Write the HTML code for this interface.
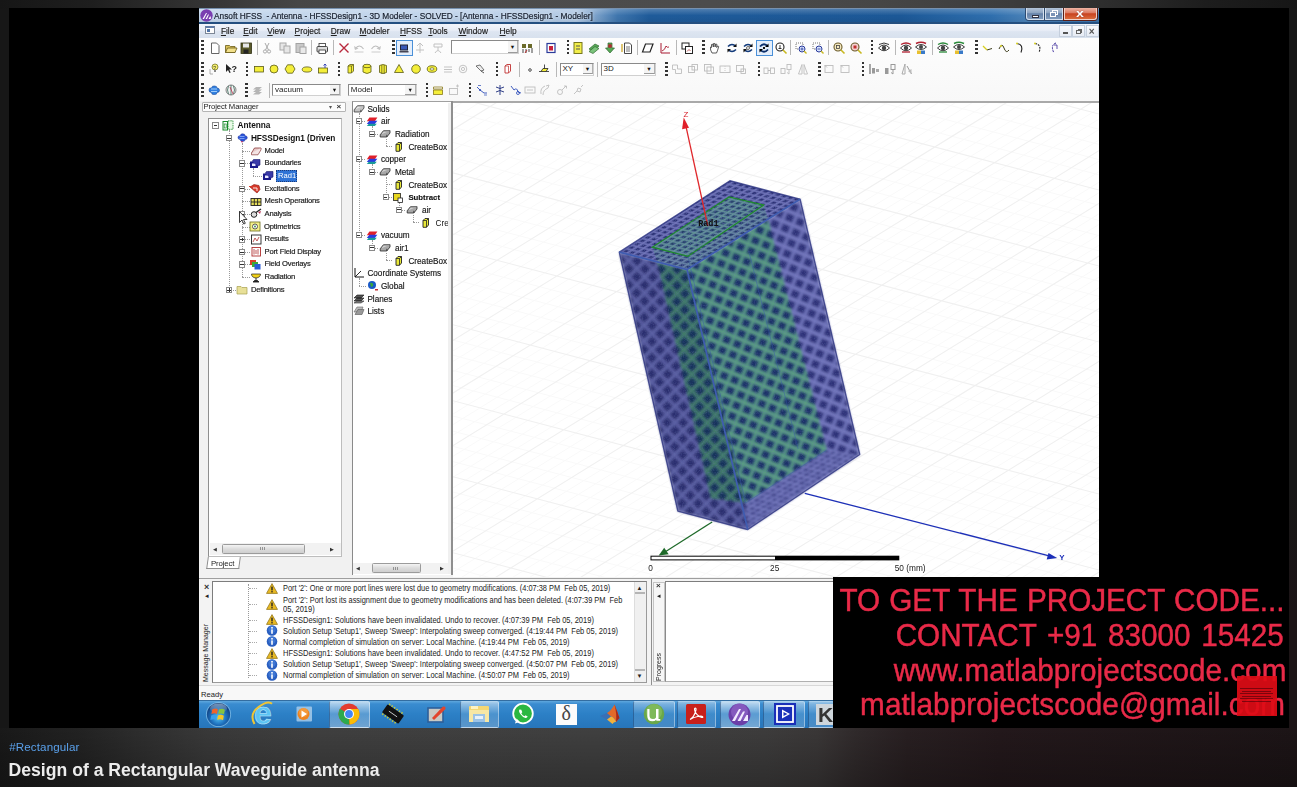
<!DOCTYPE html>
<html><head><meta charset="utf-8"><title>Design of a Rectangular Waveguide antenna</title>
<style>
html,body{margin:0;padding:0}
body{width:1297px;height:787px;overflow:hidden;position:relative;background:#1b1b1b;font-family:"Liberation Sans",sans-serif;}
div,svg{position:absolute;box-sizing:border-box}
.t{white-space:nowrap;line-height:12px;height:12px;margin-top:-6px;font-size:8px;color:#1a1a1a;}
.b{font-weight:bold}
.m{font-size:8.7px;color:#1c1c1c;transform:scaleX(.853);transform-origin:0 50%}
.ov{white-space:nowrap;font-size:29.7px;line-height:34px;height:34px;color:#e92a48;left:832.2px;width:450px;text-align:right;transform:scaleY(1.07);transform-origin:100% 26.8px;-webkit-text-stroke:.45px #e92a48}
.sep{width:1px;height:15px;background:#b8b8b8}
.grip{width:3px;height:17px;background:repeating-linear-gradient(to bottom,#333 0,#333 2px,transparent 2px,transparent 4px)}
</style></head><body>
<div style="left:0px;top:0px;width:1297px;height:787px;background:#171717"></div>
<div style="left:1280px;top:0px;width:17px;height:787px;background:linear-gradient(to bottom,#171717 0,#171717 62%,#1c1416 78%)"></div>
<div style="left:0px;top:728px;width:1297px;height:59px;background:linear-gradient(to right,#191919 0,#222222 6%,#2e2e2e 11%,#393939 16%,#3f3f3f 24%,#404040 46%,#3d3c3c 59%,#3a3737 63%,#302a2b 66%,#281f21 70%,#23181b 77%,#1c1416 100%)"></div>
<div style="left:0px;top:728px;width:1297px;height:59px;background:linear-gradient(to bottom,rgba(0,0,0,0) 0,rgba(0,0,0,.25) 100%)"></div>
<div style="left:0px;top:0px;width:1297px;height:9px;background:linear-gradient(to right,#161616 0,#1e1e1e 7%,#323232 15%,#464646 23%,#4b4b4b 32%,#4c4c4c 55%,#464646 68%,#3c3c3c 78%,#2c2c2c 86%,#1d1d1d 93%,#161616 100%)"></div>
<div style="left:0;top:0;width:1297px;height:787px;filter:blur(.45px);clip-path:inset(8px 8px 59px 9px)">
<div style="left:9px;top:8px;width:1280px;height:720px;background:#000"></div>
<div style="left:199px;top:8px;width:900px;height:720px;background:#f4f4f4"></div>
<div style="left:199px;top:8px;width:900px;height:15px;background:linear-gradient(to right,#c3d6ec 0,#bdd2ea 30%,#aec6e2 42%,#3f76ae 46.5%,#1f5b9a 50%,#1c5897 78%,#2f6fae 88%,#4a82b8 92%,#3a74ae 100%)"></div>
<div style="left:199px;top:8px;width:900px;height:1px;background:#4d6f96"></div>
<div style="left:199px;top:8px;width:900px;height:15px;background:linear-gradient(to bottom,rgba(255,255,255,.25),rgba(255,255,255,0) 50%,rgba(0,0,0,.06))"></div>
<div style="left:199px;top:22px;width:900px;height:1.5px;background:#244f80"></div>
<svg style="left:200px;top:9px" width="13" height="13" viewBox="0 0 13 13"><circle cx="6.500" cy="6.500" r="6.200" fill="#7a3fb0"/><path d="M2.500 10 L6 4 l1 0 L4 10z M5.500 10 L8 5.500 l1 0 L7 10z M8.500 10 l1.500-2.500 .8 0 0 2.500z" fill="#fff"/></svg>
<div class="t" style="left:214px;top:15.5px;font-size:8.3px;color:#141c2a;-webkit-text-stroke:.2px #1a2436;text-shadow:0 0 3px rgba(255,255,255,.9)">Ansoft HFSS&nbsp; - Antenna - HFSSDesign1 - 3D Modeler - SOLVED - [Antenna - HFSSDesign1 - Modeler]</div>
<div style="left:1026px;top:8px;width:18px;height:12px;background:linear-gradient(to bottom,#b4c4d8,#8ba2c0 45%,#6481a8 52%,#7f9abc);border:1px solid #d5e0ee;border-top:0;box-shadow:0 0 0 1px #2c4a70;border-radius:0 0 0 3px"></div>
<div style="left:1031.5px;top:14.5px;width:7.5px;height:3px;background:#fff;border:.5px solid #334"></div>
<div style="left:1045px;top:8px;width:18px;height:12px;background:linear-gradient(to bottom,#b4c4d8,#8ba2c0 45%,#6481a8 52%,#7f9abc);border:1px solid #d5e0ee;border-top:0;box-shadow:0 0 0 1px #2c4a70"></div>
<div style="left:1052px;top:10.2px;width:6px;height:5px;border:1.2px solid #fff"></div>
<div style="left:1050px;top:12.2px;width:6px;height:5px;border:1.2px solid #fff;background:#7a93b6"></div>
<div style="left:1064px;top:8px;width:33px;height:12px;background:linear-gradient(to bottom,#eeb4a4,#dc7a62 45%,#c8421f 52%,#da6a3c);border:1px solid #f0d0c8;border-top:0;box-shadow:0 0 0 1px #5a2018;border-radius:0 0 3px 0"></div>
<div class="t" style="left:1076.5px;top:13.6px;font-size:10.5px;font-weight:bold;color:#fff;line-height:10px;height:10px;margin-top:-6px;transform:scaleX(1.35);text-shadow:0 0 1px #733">x</div>
<div style="left:199px;top:23.5px;width:900px;height:14.5px;background:linear-gradient(to bottom,#f1f4fa,#e8edf6 45%,#dde5f1 55%,#d8e1ee 100%)"></div>
<div style="left:199px;top:37.5px;width:900px;height:0.8px;background:#c9d3e2"></div>
<div style="left:205px;top:25.5px;width:9.5px;height:8.5px;background:#fdfdfd;border:1px solid #7d8796;border-top:2px solid #5e7aa5"></div>
<div style="left:207px;top:29px;width:2.5px;height:3px;background:#4f74a8"></div>
<div class="t" style="left:220.9px;top:31.2px;font-size:8.3px;color:#151515;-webkit-text-stroke:.15px #222"><u>F</u>ile</div>
<div class="t" style="left:243.2px;top:31.2px;font-size:8.3px;color:#151515;-webkit-text-stroke:.15px #222"><u>E</u>dit</div>
<div class="t" style="left:267.3px;top:31.2px;font-size:8.3px;color:#151515;-webkit-text-stroke:.15px #222"><u>V</u>iew</div>
<div class="t" style="left:294.6px;top:31.2px;font-size:8.3px;color:#151515;-webkit-text-stroke:.15px #222"><u>P</u>roject</div>
<div class="t" style="left:330.8px;top:31.2px;font-size:8.3px;color:#151515;-webkit-text-stroke:.15px #222"><u>D</u>raw</div>
<div class="t" style="left:359.5px;top:31.2px;font-size:8.3px;color:#151515;-webkit-text-stroke:.15px #222"><u>M</u>odeler</div>
<div class="t" style="left:400px;top:31.2px;font-size:8.3px;color:#151515;-webkit-text-stroke:.15px #222"><u>H</u>FSS</div>
<div class="t" style="left:428.3px;top:31.2px;font-size:8.3px;color:#151515;-webkit-text-stroke:.15px #222"><u>T</u>ools</div>
<div class="t" style="left:458.4px;top:31.2px;font-size:8.3px;color:#151515;-webkit-text-stroke:.15px #222"><u>W</u>indow</div>
<div class="t" style="left:499.6px;top:31.2px;font-size:8.3px;color:#151515;-webkit-text-stroke:.15px #222"><u>H</u>elp</div>
<div style="left:1058.5px;top:24.5px;width:13px;height:12.5px;background:linear-gradient(to bottom,#fafbfd,#e6ebf4);border:1px solid #c5cfdd"></div>
<div style="left:1072px;top:24.5px;width:13px;height:12.5px;background:linear-gradient(to bottom,#fafbfd,#e6ebf4);border:1px solid #c5cfdd"></div>
<div style="left:1085.5px;top:24.5px;width:13px;height:12.5px;background:linear-gradient(to bottom,#fafbfd,#e6ebf4);border:1px solid #c5cfdd"></div>
<div style="left:1062.5px;top:32.3px;width:5px;height:1.6px;background:#555"></div>
<div style="left:1077.5px;top:28.6px;width:4.5px;height:4px;border:1px solid #666;border-top-width:1.6px"></div>
<div style="left:1076px;top:30.4px;width:4.5px;height:4px;border:1px solid #666;border-top-width:1.6px;background:#eef2f8"></div>
<div class="t" style="left:1088.8px;top:32.4px;font-size:10px;font-weight:bold;color:#555;line-height:10px;height:10px;margin-top:-5.5px">×</div>
<div style="left:199px;top:38px;width:900px;height:63px;background:linear-gradient(to bottom,#fdfdfd,#f8f8f8)"></div>
<div class="grip" style="left:201.20000000000002px;top:40.3px;width:2.6px;height:15px;"></div>
<svg style="left:207.9px;top:40.8px" width="14" height="14" viewBox="0 0 14 14"><path d="M3.500 2 h5 l2.500 2.500 v8 h-7.500z" fill="#fff" stroke="#555" stroke-width=".9"/></svg>
<svg style="left:223.5px;top:40.8px" width="14" height="14" viewBox="0 0 14 14"><path d="M1.500 4.500 h4 l1 1 h4.500 v6 h-9.500z" fill="#d9c25a" stroke="#6a5a18" stroke-width=".8"/><path d="M1.500 11.500 l2-4.500 h9.500 l-2 4.500z" fill="#f2e08a" stroke="#6a5a18" stroke-width=".8"/></svg>
<svg style="left:239.4px;top:40.8px" width="14" height="14" viewBox="0 0 14 14"><rect x="2" y="2" width="10.500" height="10.500" fill="#5a5a2a" stroke="#2f2f12" stroke-width=".8"/><rect x="4" y="2.500" width="6" height="4" fill="#e8e8e8"/><rect x="4.500" y="8.500" width="5" height="4" fill="#222"/></svg>
<div class="sep" style="left:256.9px;top:40.3px;width:1px;height:15px;"></div>
<svg style="left:260.3px;top:40.8px" width="14" height="14" viewBox="0 0 14 14"><path d="M5 2 l3.500 7 M9 2 l-3.500 7" stroke="#aaa" stroke-width="1"/><circle cx="5" cy="10.500" r="1.600" fill="none" stroke="#aaa"/><circle cx="9" cy="10.500" r="1.600" fill="none" stroke="#aaa"/></svg>
<svg style="left:277.5px;top:40.8px" width="14" height="14" viewBox="0 0 14 14"><rect x="2" y="2" width="6" height="7" fill="#e6e6e6" stroke="#a8a8a8"/><rect x="6" y="5" width="6" height="7" fill="#e6e6e6" stroke="#a8a8a8"/></svg>
<svg style="left:293.5px;top:40.8px" width="14" height="14" viewBox="0 0 14 14"><rect x="2" y="2.500" width="8" height="9" fill="#c9c9c9" stroke="#a3a3a3"/><rect x="6" y="6" width="6" height="6.500" fill="#e9e9e9" stroke="#a3a3a3"/></svg>
<div class="sep" style="left:311.0px;top:40.3px;width:1px;height:15px;"></div>
<svg style="left:315.3px;top:40.8px" width="14" height="14" viewBox="0 0 14 14"><rect x="2" y="5.500" width="10.500" height="5.500" rx="1" fill="#ddd" stroke="#333" stroke-width=".9"/><rect x="4" y="2.500" width="6.500" height="3" fill="#fff" stroke="#333" stroke-width=".8"/><rect x="4" y="9" width="6.500" height="3.500" fill="#fff" stroke="#333" stroke-width=".8"/></svg>
<div class="sep" style="left:332.8px;top:40.3px;width:1px;height:15px;"></div>
<svg style="left:336.6px;top:40.8px" width="14" height="14" viewBox="0 0 14 14"><path d="M2.500 2.500 l9 9 M11.500 2.500 l-9 9" stroke="#b8283c" stroke-width="1.400"/></svg>
<svg style="left:352.0px;top:40.8px" width="14" height="14" viewBox="0 0 14 14"><path d="M3 8 q4.500-6 8.500 0" fill="none" stroke="#bdbdbd" stroke-width="1.100"/><path d="M2 5 l1 4 3.500-1.500z" fill="#c4c4c4"/><path d="M2.500 11 h9" stroke="#ccc"/></svg>
<svg style="left:368.9px;top:40.8px" width="14" height="14" viewBox="0 0 14 14"><path d="M2.500 8 q4-6 8.500 0" fill="none" stroke="#bdbdbd" stroke-width="1.100"/><path d="M12 5 l-1 4 -3.500-1.500z" fill="#c4c4c4"/><path d="M2.500 11 h9" stroke="#ccc"/></svg>
<div class="grip" style="left:392.0px;top:40.3px;width:2.6px;height:15px;"></div>
<div style="left:396px;top:39.5px;width:17px;height:16.5px;background:#e4eefb;border:1px solid #4a90d8"></div>
<svg style="left:397.4px;top:40.8px" width="14" height="14" viewBox="0 0 14 14"><rect x="3.500" y="4" width="7" height="5" fill="#3858b8" stroke="#223"/><rect x="2.500" y="10" width="9" height="1.500" fill="#445"/></svg>
<svg style="left:412.8px;top:40.8px" width="14" height="14" viewBox="0 0 14 14"><path d="M7 2 v10 M4 5 l3-3 3 3 M3 9 h8" stroke="#c2c2c2" fill="none"/></svg>
<svg style="left:431.2px;top:40.8px" width="14" height="14" viewBox="0 0 14 14"><path d="M3 3 h8 v3 h-8z M7 6 v3 M4 12 q3-5 6 0" stroke="#c2c2c2" fill="none"/></svg>
<div style="left:450.6px;top:39.8px;width:68.5px;height:14px;background:#fff;border:1.4px solid #8a8a8a;border-bottom:1px solid #d0d0d0;border-right:1px solid #d0d0d0"></div>
<div style="left:507.5px;top:41.2px;width:10.5px;height:11.6px;background:#f4f4f4;border-bottom:1.4px solid #9a9a9a;border-right:1px solid #b0b0b0"></div>
<div class="t" style="left:509.8px;top:46.5px;font-size:5.5px;color:#111">▼</div>
<svg style="left:519.9px;top:40.8px" width="14" height="14" viewBox="0 0 14 14"><path d="M2 3 h4 v4 h-4z M8 3 h4 v4 h-4z" fill="#6a6a2a"/><path d="M3 8 v4 M6 8 v4 M9 8 v3 M12 7 v5" stroke="#444"/><path d="M5 12 l2-3" stroke="#c03030"/></svg>
<div class="sep" style="left:538.5px;top:40.3px;width:1px;height:15px;"></div>
<svg style="left:543.6px;top:40.8px" width="14" height="14" viewBox="0 0 14 14"><rect x="3" y="2.500" width="8" height="9" fill="#fff" stroke="#2a3a9a" stroke-width="1.200"/><rect x="5" y="5" width="4" height="4.500" fill="#c8203a"/></svg>
<div class="grip" style="left:566.5px;top:40.3px;width:2.6px;height:15px;"></div>
<svg style="left:571.3px;top:40.8px" width="14" height="14" viewBox="0 0 14 14"><rect x="3" y="1.500" width="8" height="11" fill="#f2ee4a" stroke="#77771c"/><path d="M5 5 h4 M5 8 h4" stroke="#555"/></svg>
<svg style="left:586.5px;top:40.8px" width="14" height="14" viewBox="0 0 14 14"><path d="M2 8 l6-5 4 2 -6 5z" fill="#58a858" stroke="#2e6a2e" stroke-width=".7"/><path d="M2 10.500 l6-5 4 2 -6 5z" fill="#7cc47c" stroke="#2e6a2e" stroke-width=".7"/></svg>
<svg style="left:603.2px;top:40.8px" width="14" height="14" viewBox="0 0 14 14"><path d="M5 2 h4 v5 h2.500 l-4.500 5 -4.500-5 h2.500z" fill="#58a858" stroke="#2e6a2e" stroke-width=".7"/><circle cx="7" cy="5" r="2" fill="#a33"/></svg>
<svg style="left:619.9px;top:40.8px" width="14" height="14" viewBox="0 0 14 14"><path d="M4.500 2 h5 l2 2 v8.500 h-7z" fill="#fff" stroke="#333" stroke-width=".9"/><path d="M6 6 h4 M6 8 h4 M6 10 h4" stroke="#555" stroke-width=".8"/><path d="M2 3 v8" stroke="#c9a11a" stroke-width="1.200"/></svg>
<div class="sep" style="left:637.0px;top:40.3px;width:1px;height:15px;"></div>
<svg style="left:641.0px;top:40.8px" width="14" height="14" viewBox="0 0 14 14"><path d="M4.500 3 h7.500 l-3 8 h-7.500z" fill="#fff" stroke="#222" stroke-width="1.200"/></svg>
<svg style="left:657.6px;top:40.8px" width="14" height="14" viewBox="0 0 14 14"><path d="M3 2 v10 h9" stroke="#a81830" fill="none"/><path d="M4 10 q3-1 4-5 q1 2 3 1" stroke="#a81830" fill="none" stroke-width=".9"/></svg>
<div class="sep" style="left:675.5px;top:40.3px;width:1px;height:15px;"></div>
<svg style="left:680.0px;top:40.8px" width="14" height="14" viewBox="0 0 14 14"><rect x="2" y="2" width="7" height="6" fill="#fff" stroke="#222"/><rect x="5.500" y="5.500" width="7" height="7" fill="#fff" stroke="#222"/><path d="M7 10.500 l2-2 1.500 1.500" stroke="#a33" fill="none" stroke-width=".8"/></svg>
<div class="grip" style="left:702.1999999999999px;top:40.3px;width:2.6px;height:15px;"></div>
<svg style="left:708.0px;top:40.8px" width="14" height="14" viewBox="0 0 14 14"><path d="M4 12 q-2-3-1.500-6 l1 .5 v-3 l1.300-.3 .5 2.800 .2-3.500 1.300 0 .3 3.500 .6-3 1.200 .3 -.2 3.200 1-1.600 1 .6 q-1 4-2.200 6.500z" fill="#fff" stroke="#333" stroke-width=".8"/></svg>
<svg style="left:725.4px;top:40.8px" width="14" height="14" viewBox="0 0 14 14"><path d="M3 5.500 q4-4 8 0 M11 8.500 q-4 4-8 0" fill="none" stroke="#123a7a" stroke-width="1.600"/><path d="M11.500 2.500 v3.500 h-3.500z M2.500 11.500 v-3.500 h3.500z" fill="#111"/></svg>
<svg style="left:741.0px;top:40.8px" width="14" height="14" viewBox="0 0 14 14"><path d="M3 5.500 q4-4 8 0 M11 8.500 q-4 4-8 0" fill="none" stroke="#123a7a" stroke-width="1.600"/><path d="M11.500 2.500 v3.500 h-3.500z M2.500 11.500 v-3.500 h3.500z" fill="#111"/><circle cx="7" cy="7" r="1.500" fill="none" stroke="#444" stroke-width=".8"/></svg>
<div style="left:755.5px;top:39.5px;width:17px;height:16.5px;background:#e4eefb;border:1px solid #4a90d8"></div>
<svg style="left:757.3px;top:40.8px" width="14" height="14" viewBox="0 0 14 14"><path d="M3 5.500 q4-4.500 8 0 M11 8.500 q-4 4.500-8 0" fill="none" stroke="#0c2f6c" stroke-width="1.800"/><path d="M11.500 2.500 v3.500 h-3.500z M2.500 11.500 v-3.500 h3.500z" fill="#000"/><rect x="6" y="6" width="2" height="2" fill="#111"/></svg>
<svg style="left:773.6px;top:40.8px" width="14" height="14" viewBox="0 0 14 14"><circle cx="6" cy="6" r="4" fill="#fff" stroke="#222" stroke-width="1.100"/><path d="M9 9 l3.500 3.500" stroke="#c8b820" stroke-width="1.600"/><path d="M6 4 v3.500 M4.500 7.500 h3" stroke="#222" stroke-width=".9"/></svg>
<div class="sep" style="left:789.5px;top:40.3px;width:1px;height:15px;"></div>
<svg style="left:793.5px;top:40.8px" width="14" height="14" viewBox="0 0 14 14"><rect x="2" y="2" width="7" height="6" fill="none" stroke="#555" stroke-dasharray="1 1" stroke-width=".8"/><circle cx="8" cy="8" r="3" fill="#d8e4ff" stroke="#2a3a9a"/><path d="M6.500 8 h3 M8 6.500 v3" stroke="#2a3a9a" stroke-width=".8"/><path d="M10 10 l2.500 2.500" stroke="#c8b820" stroke-width="1.400"/></svg>
<svg style="left:810.5px;top:40.8px" width="14" height="14" viewBox="0 0 14 14"><rect x="2" y="2" width="7" height="6" fill="none" stroke="#555" stroke-dasharray="1 1" stroke-width=".8"/><circle cx="8" cy="8" r="3" fill="#d8e4ff" stroke="#2a3a9a"/><path d="M6.500 8 h3" stroke="#2a3a9a" stroke-width=".8"/><path d="M10 10 l2.500 2.500" stroke="#c8b820" stroke-width="1.400"/></svg>
<div class="sep" style="left:827.5px;top:40.3px;width:1px;height:15px;"></div>
<svg style="left:831.5px;top:40.8px" width="14" height="14" viewBox="0 0 14 14"><circle cx="6" cy="6" r="4" fill="#f5e9c0" stroke="#6a5a2a" stroke-width="1.100"/><rect x="4.500" y="4.500" width="3" height="3" fill="none" stroke="#444" stroke-width=".8"/><path d="M9 9 l3.500 3.500" stroke="#c8b820" stroke-width="1.600"/></svg>
<svg style="left:849.3px;top:40.8px" width="14" height="14" viewBox="0 0 14 14"><circle cx="6" cy="6" r="4" fill="#f5d0d0" stroke="#6a5a2a" stroke-width="1.100"/><rect x="4.500" y="4.500" width="3" height="3" fill="#c03030"/><path d="M9 9 l3.500 3.500" stroke="#c8b820" stroke-width="1.600"/></svg>
<div class="grip" style="left:870.8px;top:40.3px;width:2.6px;height:15px;"></div>
<svg style="left:876.5px;top:40.8px" width="14" height="14" viewBox="0 0 14 14"><path d="M1.500 7 q5.500-6 11 0 q-5.500 5.500-11 0z" fill="#fff" stroke="#222" stroke-width=".9"/><circle cx="7" cy="7" r="2.200" fill="#444"/><path d="M2 3.500 q5-3 10 0" stroke="#222" fill="none" stroke-width=".9"/></svg>
<div class="sep" style="left:894.5px;top:40.3px;width:1px;height:15px;"></div>
<svg style="left:899.3px;top:40.8px" width="14" height="14" viewBox="0 0 14 14"><path d="M1.500 7 q5.500-6 11 0 q-5.500 5.500-11 0z" fill="#fff" stroke="#222" stroke-width=".9"/><circle cx="7" cy="7" r="2.200" fill="#444"/><path d="M2 3.500 q5-3 10 0" stroke="#b02030" fill="none" stroke-width="1.400"/><path d="M3 11 h8" stroke="#b02030" stroke-width="1.300"/></svg>
<svg style="left:913.8px;top:40.8px" width="14" height="14" viewBox="0 0 14 14"><path d="M1.500 6 q5.500-5 11 0 q-5.500 5-11 0z" fill="#fff" stroke="#222" stroke-width=".9"/><circle cx="7" cy="6" r="2" fill="#444"/><path d="M2 2.500 q5-2.500 10 0" stroke="#b02030" fill="none" stroke-width="1.400"/><rect x="3" y="9.500" width="4" height="3.500" fill="#e8c030"/><rect x="7" y="9.500" width="4" height="3.500" fill="#3a7ac8"/></svg>
<div class="sep" style="left:931.5px;top:40.3px;width:1px;height:15px;"></div>
<svg style="left:935.5px;top:40.8px" width="14" height="14" viewBox="0 0 14 14"><path d="M1.500 7 q5.500-6 11 0 q-5.500 5.500-11 0z" fill="#fff" stroke="#222" stroke-width=".9"/><circle cx="7" cy="7" r="2.200" fill="#444"/><path d="M2 3.500 q5-3 10 0" stroke="#2a8a3a" fill="none" stroke-width="1.400"/><path d="M3 11 h8" stroke="#2a8a3a" stroke-width="1.300"/></svg>
<svg style="left:951.8px;top:40.8px" width="14" height="14" viewBox="0 0 14 14"><path d="M1.500 6 q5.500-5 11 0 q-5.500 5-11 0z" fill="#fff" stroke="#222" stroke-width=".9"/><circle cx="7" cy="6" r="2" fill="#444"/><path d="M2 2.500 q5-2.500 10 0" stroke="#2a8a3a" fill="none" stroke-width="1.400"/><rect x="3" y="9.500" width="4" height="3.500" fill="#e8c030"/><rect x="7" y="9.500" width="4" height="3.500" fill="#3a7ac8"/></svg>
<div class="grip" style="left:975.0px;top:40.3px;width:2.6px;height:15px;"></div>
<svg style="left:980.8px;top:40.8px" width="14" height="14" viewBox="0 0 14 14"><path d="M2 5 l4 4 5-1.500" fill="none" stroke="#3a3a1a" stroke-width="1"/><path d="M2 5 l4 4" stroke="#d8d020" stroke-width="1.200"/></svg>
<svg style="left:997.0px;top:40.8px" width="14" height="14" viewBox="0 0 14 14"><path d="M2 8 q3-7 5-1 t5 2" fill="none" stroke="#3a3a1a" stroke-width="1"/><circle cx="4" cy="5" r="1" fill="#d8d020"/></svg>
<svg style="left:1013.4px;top:40.8px" width="14" height="14" viewBox="0 0 14 14"><path d="M4 2.500 q7 1 4 9" fill="none" stroke="#222" stroke-width="1.100"/><circle cx="4" cy="2.500" r="1" fill="#d8d020"/></svg>
<svg style="left:1030.8px;top:40.8px" width="14" height="14" viewBox="0 0 14 14"><path d="M4 2.500 q7 1 4 9" fill="none" stroke="#222" stroke-width="1.100" stroke-dasharray="2 1"/><circle cx="4" cy="2.500" r="1" fill="#d8d020"/></svg>
<svg style="left:1047.0px;top:40.8px" width="14" height="14" viewBox="0 0 14 14"><path d="M9 2 q-6 2-2 10" fill="none" stroke="#3a2a9a" stroke-width="1" stroke-dasharray="2 1"/><path d="M7 4 h3 v4" stroke="#3a2a9a" fill="none" stroke-width=".8"/></svg>
<div class="grip" style="left:201.20000000000002px;top:61.5px;width:2.6px;height:15px;"></div>
<svg style="left:207.0px;top:62.0px" width="14" height="14" viewBox="0 0 14 14"><circle cx="8" cy="5" r="3" fill="#f4ee6a" stroke="#7a7a2a" stroke-width=".8"/><path d="M7 8 h2 v2 h-2z" fill="#888"/><path d="M3 7 v5 h3" stroke="#999" fill="none" stroke-width=".8"/><text x="6.300" y="7.500" font-size="5" font-family="Liberation Sans,sans-serif" fill="#333">?</text></svg>
<svg style="left:223.8px;top:62.0px" width="14" height="14" viewBox="0 0 14 14"><path d="M2 2 l0 8 2-2 1.500 3 1.200-.6 -1.500-3 2.800 0z" fill="#222"/><text x="7.500" y="9.500" font-size="9" font-weight="bold" font-family="Liberation Sans,sans-serif" fill="#222">?</text></svg>
<div class="grip" style="left:245.5px;top:61.5px;width:2.6px;height:15px;"></div>
<svg style="left:252.10000000000002px;top:62.0px" width="14" height="14" viewBox="0 0 14 14"><rect x="2.500" y="4.500" width="9" height="5.500" fill="#f4ee3a" stroke="#5a5a18" stroke-width=".8"/></svg>
<svg style="left:267.4px;top:62.0px" width="14" height="14" viewBox="0 0 14 14"><circle cx="7" cy="7" r="4" fill="#f4ee3a" stroke="#5a5a18" stroke-width=".8"/></svg>
<svg style="left:283.4px;top:62.0px" width="14" height="14" viewBox="0 0 14 14"><path d="M4.500 2.800 h5 l2.500 4.200 -2.500 4.200 h-5 l-2.500-4.200z" fill="#f4ee3a" stroke="#5a5a18" stroke-width=".8"/></svg>
<svg style="left:300.0px;top:62.0px" width="14" height="14" viewBox="0 0 14 14"><ellipse cx="7" cy="7.500" rx="4.800" ry="2.600" fill="#f4ee3a" stroke="#5a5a18" stroke-width=".8"/></svg>
<svg style="left:316.0px;top:62.0px" width="14" height="14" viewBox="0 0 14 14"><rect x="2.500" y="6" width="9" height="5" fill="#f4ee3a" stroke="#5a5a18" stroke-width=".8"/><path d="M9 6 v-3.500 M7.500 3.500 l1.500-1.500 1.500 1.500" stroke="#2a3ab0" fill="none" stroke-width=".9"/></svg>
<div class="grip" style="left:337.8px;top:61.5px;width:2.6px;height:15px;"></div>
<svg style="left:344.3px;top:62.0px" width="14" height="14" viewBox="0 0 14 14"><path d="M4 4 l2-1.500 h3.500 v6.500 l-2 2 h-3.500z" fill="#f4ee3a" stroke="#5a5a18" stroke-width=".8"/><path d="M4 4 h3.500 v7 M7.500 4 l2-1.500" fill="none" stroke="#5a5a18" stroke-width=".7"/></svg>
<svg style="left:360.3px;top:62.0px" width="14" height="14" viewBox="0 0 14 14"><path d="M3 4 v6 q4 3 8 0 v-6z" fill="#f4ee3a" stroke="#5a5a18" stroke-width=".8"/><ellipse cx="7" cy="4" rx="4" ry="1.700" fill="#f4ee3a" stroke="#5a5a18" stroke-width=".8"/></svg>
<svg style="left:376.3px;top:62.0px" width="14" height="14" viewBox="0 0 14 14"><path d="M3.500 3.500 q3.500-2 7 0 v7 q-3.500 2-7 0z" fill="#f4ee3a" stroke="#5a5a18" stroke-width=".8"/><path d="M5.800 3 v9 M8.200 3 v9" stroke="#5a5a18" stroke-width=".7"/></svg>
<svg style="left:392.2px;top:62.0px" width="14" height="14" viewBox="0 0 14 14"><path d="M7 2.500 l4.500 8 h-9z" fill="#f4ee3a" stroke="#5a5a18" stroke-width=".8"/></svg>
<svg style="left:408.9px;top:62.0px" width="14" height="14" viewBox="0 0 14 14"><circle cx="7" cy="7" r="4.300" fill="#f4ee3a" stroke="#5a5a18" stroke-width=".8"/></svg>
<svg style="left:425.2px;top:62.0px" width="14" height="14" viewBox="0 0 14 14"><ellipse cx="7" cy="7" rx="4.800" ry="3.300" fill="#f4ee3a" stroke="#5a5a18" stroke-width=".8"/><ellipse cx="7" cy="7" rx="2" ry="1.200" fill="#fff" stroke="#5a5a18" stroke-width=".7"/></svg>
<svg style="left:441.2px;top:62.0px" width="14" height="14" viewBox="0 0 14 14"><path d="M3 5 h8 M3 7.500 h8 M3 10 h8" fill="none" stroke="#bdbdbd" stroke-width=".9"/></svg>
<svg style="left:456.0px;top:62.0px" width="14" height="14" viewBox="0 0 14 14"><circle cx="7" cy="7" r="3.800" fill="none" stroke="#bdbdbd" stroke-width=".9"/><circle cx="7" cy="7" r="1.600" fill="none" stroke="#bdbdbd" stroke-width=".9"/></svg>
<svg style="left:473.0px;top:62.0px" width="14" height="14" viewBox="0 0 14 14"><path d="M3 4 l4-1 4 5 -3 1z" fill="#eee" stroke="#555" stroke-width=".8"/><path d="M8 9 l3 2" stroke="#555"/></svg>
<div class="grip" style="left:495.5px;top:61.5px;width:2.6px;height:15px;"></div>
<svg style="left:501.0px;top:62.0px" width="14" height="14" viewBox="0 0 14 14"><path d="M4 4 l2-1.500 h3.500 v6.500 l-2 2 h-3.500z" fill="#fff" stroke="#c03030" stroke-width=".9"/><path d="M4 4 h3.500 v7" fill="none" stroke="#c03030" stroke-width=".7"/></svg>
<div class="sep" style="left:519.3px;top:61.5px;width:1px;height:15px;"></div>
<svg style="left:523.4px;top:62.0px" width="14" height="14" viewBox="0 0 14 14"><circle cx="7" cy="8" r="1.300" fill="#fff" stroke="#222" stroke-width=".8"/></svg>
<svg style="left:536.9px;top:62.0px" width="14" height="14" viewBox="0 0 14 14"><path d="M2 9.500 h10 M4 9.500 l2-3 h5 l-2 3" stroke="#222" fill="#f4ee3a" stroke-width=".8"/><path d="M7.500 6.500 v-4" stroke="#222" stroke-width=".8"/></svg>
<div class="sep" style="left:555.8px;top:61.5px;width:1px;height:15px;"></div>
<div style="left:559.5px;top:62.5px;width:34.5px;height:13px;background:#fff;border:1.4px solid #8a8a8a;border-bottom:1px solid #d0d0d0;border-right:1px solid #d0d0d0"></div>
<div style="left:582.5px;top:63.9px;width:10.5px;height:10.6px;background:#f4f4f4;border-bottom:1.4px solid #9a9a9a;border-right:1px solid #b0b0b0"></div>
<div class="t" style="left:584.8px;top:68.7px;font-size:5.500px;color:#111">▼</div>
<div class="t" style="left:562.5px;top:69.3px;font-size:8px;color:#222">XY</div>
<div class="sep" style="left:596.5px;top:61.5px;width:1px;height:15px;"></div>
<div style="left:600.5px;top:62.5px;width:55px;height:13px;background:#fff;border:1.4px solid #8a8a8a;border-bottom:1px solid #d0d0d0;border-right:1px solid #d0d0d0"></div>
<div style="left:644.0px;top:63.9px;width:10.5px;height:10.6px;background:#f4f4f4;border-bottom:1.4px solid #9a9a9a;border-right:1px solid #b0b0b0"></div>
<div class="t" style="left:646.3px;top:68.7px;font-size:5.500px;color:#111">▼</div>
<div class="t" style="left:603.5px;top:69.3px;font-size:8px;color:#222">3D</div>
<div class="grip" style="left:665.0999999999999px;top:61.5px;width:2.6px;height:15px;"></div>
<svg style="left:670.3px;top:62.0px" width="14" height="14" viewBox="0 0 14 14"><path d="M2.500 3 h5 v4 h4 v4.500 h-6 v-4 h-3z" fill="none" stroke="#bdbdbd" stroke-width=".9"/></svg>
<svg style="left:685.7px;top:62.0px" width="14" height="14" viewBox="0 0 14 14"><rect x="2.500" y="4.500" width="6" height="6" fill="none" stroke="#bdbdbd" stroke-width=".9"/><rect x="6" y="2.500" width="5.500" height="5.500" fill="none" stroke="#bdbdbd" stroke-width=".9"/></svg>
<svg style="left:702.0px;top:62.0px" width="14" height="14" viewBox="0 0 14 14"><rect x="2.500" y="2.500" width="6.500" height="6.500" fill="none" stroke="#bdbdbd" stroke-width=".9"/><rect x="5" y="5" width="6.500" height="6.500" fill="none" stroke="#bdbdbd" stroke-width=".9"/></svg>
<svg style="left:717.6px;top:62.0px" width="14" height="14" viewBox="0 0 14 14"><rect x="2" y="4" width="10" height="6.500" fill="none" stroke="#bdbdbd" stroke-width=".9"/><path d="M7 4 v6.500" stroke="#ccc" stroke-dasharray="1 1"/></svg>
<svg style="left:734.3px;top:62.0px" width="14" height="14" viewBox="0 0 14 14"><rect x="2.500" y="3.500" width="7" height="6" fill="none" stroke="#bdbdbd" stroke-width=".9"/><rect x="7" y="7" width="4.500" height="4.500" fill="none" stroke="#bdbdbd" stroke-width=".9"/></svg>
<div class="grip" style="left:757.8px;top:61.5px;width:2.6px;height:15px;"></div>
<svg style="left:762.4px;top:62.0px" width="14" height="14" viewBox="0 0 14 14"><rect x="2" y="6" width="4" height="5.500" fill="none" stroke="#bdbdbd" stroke-width=".9"/><rect x="8.500" y="6" width="4" height="5.500" fill="none" stroke="#bdbdbd" stroke-width=".9"/><path d="M6 8.500 h2.500" stroke="#bbb"/></svg>
<svg style="left:779.0px;top:62.0px" width="14" height="14" viewBox="0 0 14 14"><rect x="2" y="6.500" width="4" height="5" fill="none" stroke="#bdbdbd" stroke-width=".9"/><rect x="8" y="2.500" width="4" height="5" fill="none" stroke="#bdbdbd" stroke-width=".9"/><path d="M10 8 v4 l-2-1.500" fill="none" stroke="#bdbdbd" stroke-width=".9"/></svg>
<svg style="left:795.7px;top:62.0px" width="14" height="14" viewBox="0 0 14 14"><path d="M6 2.500 v9.500 l-3.500 0z M8 2.500 v9.500 l3.500 0z" fill="none" stroke="#bdbdbd" stroke-width=".9"/></svg>
<div class="grip" style="left:818.1999999999999px;top:61.5px;width:2.6px;height:15px;"></div>
<svg style="left:822.0px;top:62.0px" width="14" height="14" viewBox="0 0 14 14"><rect x="3" y="3.500" width="8" height="7" fill="none" stroke="#bdbdbd" stroke-width=".9"/><path d="M3 3.500 l2 2" stroke="#bbb"/></svg>
<svg style="left:838.4px;top:62.0px" width="14" height="14" viewBox="0 0 14 14"><rect x="3" y="3.500" width="8" height="7" fill="none" stroke="#bdbdbd" stroke-width=".9"/><path d="M3 3.500 l2 2" stroke="#bbb"/></svg>
<div class="grip" style="left:861.5999999999999px;top:61.5px;width:2.6px;height:15px;"></div>
<svg style="left:866.7px;top:62.0px" width="14" height="14" viewBox="0 0 14 14"><path d="M3 2 v10" stroke="#555"/><rect x="5" y="6" width="3" height="5.500" fill="#999"/><rect x="9" y="7" width="3" height="3" fill="#aaa"/></svg>
<svg style="left:883.0px;top:62.0px" width="14" height="14" viewBox="0 0 14 14"><rect x="2" y="6" width="3.500" height="6" fill="#999"/><rect x="8" y="2.500" width="4" height="5" fill="none" stroke="#999"/><path d="M10 8 v4 l-2-1.500" stroke="#999" fill="none"/></svg>
<svg style="left:900.0px;top:62.0px" width="14" height="14" viewBox="0 0 14 14"><path d="M5 2 v10 l-3 0z" fill="none" stroke="#aaa"/><path d="M7 4 l4.500 8" stroke="#999"/><path d="M8 9 l3.500 3 v-5" fill="#bbb"/></svg>
<div class="grip" style="left:201.20000000000002px;top:82.7px;width:2.6px;height:15px;"></div>
<svg style="left:206.6px;top:83.2px" width="14" height="14" viewBox="0 0 14 14"><path d="M2 7 q0-2.500 2.500-2 q.5-2.500 3-2 q2.500 0 2.500 2 q2.500 0 2.500 2.500 q0 2-2.500 2 q0 2.500-3 2 q-2.500 .5-2.500-2 q-2.500 0-2.500-2.500z" fill="#2f7fe0" stroke="#1a4a9a" stroke-width=".6"/><path d="M4 6 h6 M4 8.500 h6" stroke="#bfe0ff" stroke-width=".8"/></svg>
<svg style="left:223.5px;top:83.2px" width="14" height="14" viewBox="0 0 14 14"><circle cx="7" cy="7" r="5" fill="#f2f2f2" stroke="#666" stroke-width=".8"/><path d="M7 2 v10 M4.500 3 q-2 4 0 8 M9.500 3 q2 4 0 8" stroke="#3a6a5a" fill="none" stroke-width=".8"/><path d="M6 4 l3 7" stroke="#c03050" stroke-width=".8"/></svg>
<div class="grip" style="left:245.20000000000002px;top:82.7px;width:2.6px;height:15px;"></div>
<svg style="left:250.39999999999998px;top:83.2px" width="14" height="14" viewBox="0 0 14 14"><path d="M3 9 l3-2.500 h6 l-3 2.500z M3 6.500 l3-2.500 h6 l-3 2.500z M3 11.500 l3-2.500 h6 l-3 2.500z" fill="#b5b5b5"/></svg>
<div class="sep" style="left:269.0px;top:82.7px;width:1px;height:15px;"></div>
<div style="left:272px;top:83.8px;width:69px;height:12.5px;background:#fff;border:1.4px solid #8a8a8a;border-bottom:1px solid #d0d0d0;border-right:1px solid #d0d0d0"></div>
<div style="left:329.5px;top:85.2px;width:10.5px;height:10.1px;background:#f4f4f4;border-bottom:1.4px solid #9a9a9a;border-right:1px solid #b0b0b0"></div>
<div class="t" style="left:331.8px;top:89.75px;font-size:5.500px;color:#111">▼</div>
<div class="t" style="left:275px;top:90.35px;font-size:8px;color:#222">vacuum</div>
<div style="left:347.8px;top:83.8px;width:69px;height:12.5px;background:#fff;border:1.4px solid #8a8a8a;border-bottom:1px solid #d0d0d0;border-right:1px solid #d0d0d0"></div>
<div style="left:405.3px;top:85.2px;width:10.5px;height:10.1px;background:#f4f4f4;border-bottom:1.4px solid #9a9a9a;border-right:1px solid #b0b0b0"></div>
<div class="t" style="left:407.6px;top:89.75px;font-size:5.500px;color:#111">▼</div>
<div class="t" style="left:350.8px;top:90.35px;font-size:8px;color:#222">Model</div>
<div class="grip" style="left:425.7px;top:82.7px;width:2.6px;height:15px;"></div>
<svg style="left:431.2px;top:83.2px" width="14" height="14" viewBox="0 0 14 14"><path d="M2.500 4 h9 v2 h-9z" fill="#fff" stroke="#8a7a1a" stroke-width=".8"/><rect x="2.500" y="7" width="9" height="4.500" fill="#f4ee3a" stroke="#8a7a1a" stroke-width=".8"/></svg>
<svg style="left:447.2px;top:83.2px" width="14" height="14" viewBox="0 0 14 14"><rect x="2.500" y="5.500" width="8" height="6" fill="none" stroke="#bdbdbd" stroke-width=".9"/><path d="M9 3 h3 M10.500 1.500 v3" stroke="#c4c4c4"/></svg>
<div class="grip" style="left:468.90000000000003px;top:82.7px;width:2.6px;height:15px;"></div>
<svg style="left:474.5px;top:83.2px" width="14" height="14" viewBox="0 0 14 14"><path d="M2 4 l3 3 M5 7 l4 3 h3" stroke="#2a4ab8" fill="none" stroke-width=".9"/><circle cx="5" cy="7" r="1" fill="#2a4ab8"/><path d="M3 2.500 h3 M9 12 h3" stroke="#2a4ab8" stroke-width=".7"/></svg>
<svg style="left:492.6px;top:83.2px" width="14" height="14" viewBox="0 0 14 14"><path d="M7 2 v10 M3 4 q4 3 8 0 M3 9 q4-3 8 0" stroke="#1a2a7a" fill="none" stroke-width=".9"/></svg>
<svg style="left:508.5px;top:83.2px" width="14" height="14" viewBox="0 0 14 14"><path d="M2 3 l3 4 M5 7 q3-3 4 2 l3 1" stroke="#2a4ab8" fill="none" stroke-width=".9"/><circle cx="9" cy="10" r="1.500" fill="none" stroke="#2a4ab8" stroke-width=".8"/></svg>
<svg style="left:523.4px;top:83.2px" width="14" height="14" viewBox="0 0 14 14"><rect x="2" y="4" width="10" height="6" fill="none" stroke="#bdbdbd" stroke-width=".9"/><path d="M4 7 h6" stroke="#c4c4c4"/></svg>
<svg style="left:537.6px;top:83.2px" width="14" height="14" viewBox="0 0 14 14"><path d="M3 11 q-1-6 4-8 M5 12 q0-5 5-7 M8 3 l3-1 -1 3" fill="none" stroke="#bdbdbd" stroke-width=".9"/></svg>
<svg style="left:554.6px;top:83.2px" width="14" height="14" viewBox="0 0 14 14"><circle cx="5" cy="9" r="2.500" fill="none" stroke="#bdbdbd" stroke-width=".9"/><path d="M7 7 l4-4 M9 3 h2.500 v2.500" fill="none" stroke="#bdbdbd" stroke-width=".9"/></svg>
<svg style="left:571.3px;top:83.2px" width="14" height="14" viewBox="0 0 14 14"><path d="M3 11 l3-3 M6 8 l1-3 3 1 -1 3z M10 4 l2-2" fill="none" stroke="#bdbdbd" stroke-width=".9"/></svg>
<div style="left:199px;top:101px;width:154px;height:477px;background:#f1f1f1"></div>
<div style="left:202px;top:101.8px;width:144px;height:9.8px;background:#fcfcfc;border:1px solid #b4b4b4;border-radius:1px"></div>
<div class="t" style="left:203.6px;top:106.6px;font-size:7.7px;color:#1a1a1a;letter-spacing:-.1px">Project Manager</div>
<div class="t" style="left:329px;top:107px;font-size:6px;color:#555">▾</div>
<div class="t" style="left:336.5px;top:106.8px;font-size:8px;font-weight:bold;color:#333">×</div>
<div style="left:208.2px;top:117.5px;width:133.5px;height:439px;background:#fff;border:1px solid #8e8e8e;border-right-color:#bdbdbd;border-bottom-color:#bdbdbd"></div>
<div style="left:209.5px;top:543px;width:131px;height:11.5px;background:#f2f2f2"></div>
<div class="t" style="left:212.5px;top:548.6px;font-size:5px;color:#333">◀</div>
<div class="t" style="left:330px;top:548.6px;font-size:5px;color:#333">▶</div>
<div style="left:222px;top:544px;width:83px;height:9.5px;background:linear-gradient(to bottom,#f4f4f4,#dcdcdc 50%,#cfcfcf);border:1px solid #9b9b9b;border-radius:1.5px"></div>
<div class="t" style="left:259.5px;top:548.3px;font-size:6px;color:#555;letter-spacing:.3px">ııı</div>
<div style="left:206.5px;top:556.5px;width:32.5px;height:12px;background:#fff;border:1px solid #8e8e8e;border-top:0;transform:skewX(-8deg)"></div>
<div class="t" style="left:211px;top:563.6px;font-size:7.8px;color:#222;letter-spacing:-.15px">Project</div>
<div style="left:228.7px;top:130.3px;width:1px;height:159.45px;border-left:1px dotted #9a9a9a"></div>
<div style="left:242px;top:142.95px;width:1px;height:134.15000000000003px;border-left:1px dotted #9a9a9a"></div>
<div style="left:228.7px;top:289.75px;width:7.300000000000011px;height:1px;border-top:1px dotted #9a9a9a"></div>
<div style="left:253px;top:168.25px;width:1px;height:7.650000000000006px;border-left:1px dotted #9a9a9a"></div>
<div style="left:253px;top:175.9px;width:9px;height:1px;border-top:1px dotted #9a9a9a"></div>
<div style="left:212.3px;top:122.3px;width:6.4px;height:6.4px;background:#fff;border:1px solid #8a8a8a"></div>
<div style="left:213.70000000000002px;top:125.1px;width:3.6px;height:0.9px;background:#333"></div>
<svg style="left:222.0px;top:119.8px" width="12" height="11" viewBox="0 0 12 11"><rect x="1" y="1.500" width="4.500" height="8.500" fill="#fff" stroke="#1a8a2a"/><rect x="2.200" y="4" width="2" height="4" fill="none" stroke="#1a8a2a" stroke-width=".7"/><rect x="6" y=".8" width="5" height="8.500" fill="#eafbe8" stroke="#1a8a2a" stroke-width=".8" stroke-dasharray="1.500 .8"/></svg>
<div class="t" style="left:237.6px;top:125.3px;font-weight:bold;font-size:8.300px;color:#111;letter-spacing:-.05px">Antenna</div>
<div style="left:225.7px;top:134.95px;width:6.4px;height:6.4px;background:#fff;border:1px solid #8a8a8a"></div>
<div style="left:227.1px;top:137.75px;width:3.6px;height:0.9px;background:#333"></div>
<svg style="left:235.5px;top:132.45px" width="12" height="11" viewBox="0 0 12 11"><path d="M2 5.500 q0-2 2.200-1.700 q.3-2.300 2.600-2 q2.300 0 2.300 2 q2.200 0 2.200 2 q0 1.800-2.200 1.800 q0 2-2.500 1.800 q-2.200 .3-2.300-1.800 q-2.300 0-2.300-2.100z" fill="#2a55d8" stroke="#1a2a9a" stroke-width=".5"/><path d="M5 9 l1 2 1-2z" fill="#c03060"/><path d="M3.500 4.500 h5 M3.500 6.500 h5" stroke="#9cc0ff" stroke-width=".7"/></svg>
<div class="t" style="left:250.9px;top:137.95px;font-weight:bold;font-size:8.300px;color:#111;letter-spacing:-.05px">HFSSDesign1 (Driven</div>
<div style="left:242px;top:150.6px;width:8px;height:1px;border-top:1px dotted #9a9a9a"></div>
<svg style="left:249.5px;top:145.1px" width="12" height="11" viewBox="0 0 12 11"><path d="M1.500 8 l3-5 h6.500 l-3 5z" fill="#e8c8c8" stroke="#8a3a3a" stroke-width=".8"/><path d="M1.500 8 v1.800 h6.500 l3-5 v-1.800" fill="#f4e4e4" stroke="#8a3a3a" stroke-width=".7"/></svg>
<div class="t" style="left:264.6px;top:150.6px;font-size:7.600px;color:#161616;letter-spacing:-.18px;-webkit-text-stroke:.18px #222">Model</div>
<div style="left:242px;top:163.25px;width:8px;height:1px;border-top:1px dotted #9a9a9a"></div>
<div style="left:239px;top:160.25px;width:6.4px;height:6.4px;background:#fff;border:1px solid #8a8a8a"></div>
<div style="left:240.4px;top:163.05px;width:3.6px;height:0.9px;background:#333"></div>
<svg style="left:249.0px;top:157.75px" width="12" height="11" viewBox="0 0 12 11"><rect x="1" y="3.500" width="8" height="6.500" fill="#1a1a8a"/><rect x="3" y="5.500" width="3.500" height="2.500" fill="#e8e8ff"/><path d="M3 3.500 l1.500-2 h6.500 v5.500 l-2 1" fill="#3a3aa8" stroke="#1a1a6a" stroke-width=".6"/></svg>
<div class="t" style="left:264.6px;top:163.25px;font-size:7.600px;color:#161616;letter-spacing:-.18px;-webkit-text-stroke:.18px #222">Boundaries</div>
<svg style="left:262.0px;top:170.4px" width="12" height="11" viewBox="0 0 12 11"><rect x="1" y="3.500" width="8" height="6.500" fill="#1a1a8a"/><rect x="3" y="5.500" width="3.500" height="2.500" fill="#e8e8ff"/><path d="M3 3.500 l1.500-2 h6.500 v5.500 l-2 1" fill="#3a3aa8" stroke="#1a1a6a" stroke-width=".6"/></svg>
<div style="left:276.3px;top:169.9px;width:20.5px;height:12px;background:#2f74d6;border:1px dotted #1a3a7a"></div>
<div class="t" style="left:278px;top:175.9px;color:#fff;font-size:7.600px">Rad1</div>
<div style="left:242px;top:188.55px;width:8px;height:1px;border-top:1px dotted #9a9a9a"></div>
<div style="left:239px;top:185.55px;width:6.4px;height:6.4px;background:#fff;border:1px solid #8a8a8a"></div>
<div style="left:240.4px;top:188.35000000000002px;width:3.6px;height:0.9px;background:#333"></div>
<svg style="left:249.0px;top:183.05px" width="12" height="11" viewBox="0 0 12 11"><path d="M1 4 l4-2.500 5 1 1 4 -3 3.500 -3-2.500z" fill="#d83a2a" stroke="#8a1a10" stroke-width=".6"/><path d="M4 5 h4 v3" stroke="#fff" fill="none" stroke-width=".9"/><path d="M0 3.500 h3" stroke="#d83a2a"/></svg>
<div class="t" style="left:264.6px;top:188.55px;font-size:7.600px;color:#161616;letter-spacing:-.18px;-webkit-text-stroke:.18px #222">Excitations</div>
<div style="left:242px;top:201.2px;width:8px;height:1px;border-top:1px dotted #9a9a9a"></div>
<svg style="left:249.5px;top:195.7px" width="12" height="11" viewBox="0 0 12 11"><rect x="1" y="2.500" width="10" height="7" fill="#e8e05a" stroke="#222" stroke-width=".9"/><path d="M1 6 h10 M4.300 2.500 v7 M7.600 2.500 v7" stroke="#222" stroke-width=".9"/></svg>
<div class="t" style="left:264.6px;top:201.2px;font-size:7.600px;color:#161616;letter-spacing:-.18px;-webkit-text-stroke:.18px #222">Mesh Operations</div>
<div style="left:242px;top:213.85px;width:8px;height:1px;border-top:1px dotted #9a9a9a"></div>
<div style="left:239px;top:210.85px;width:6.4px;height:6.4px;background:#fff;border:1px solid #8a8a8a"></div>
<div style="left:240.4px;top:213.65px;width:3.6px;height:0.9px;background:#333"></div>
<svg style="left:249.5px;top:208.35px" width="12" height="11" viewBox="0 0 12 11"><circle cx="4" cy="6.500" r="2.800" fill="#ddd" stroke="#222" stroke-width="1"/><path d="M6 4.500 l5-3.500" stroke="#222" stroke-width="1.300"/><path d="M8 4 l3-1 -1 3z" fill="#c04060"/></svg>
<div class="t" style="left:264.6px;top:213.85px;font-size:7.600px;color:#161616;letter-spacing:-.18px;-webkit-text-stroke:.18px #222">Analysis</div>
<div style="left:242px;top:226.5px;width:8px;height:1px;border-top:1px dotted #9a9a9a"></div>
<svg style="left:249.0px;top:221.0px" width="12" height="11" viewBox="0 0 12 11"><rect x="1" y="1" width="10" height="9" fill="#f4f08a" stroke="#6a6a1a" stroke-width=".8"/><circle cx="6" cy="5.500" r="2.500" fill="#fff" stroke="#333" stroke-width=".8"/><circle cx="6" cy="5.500" r=".9" fill="#2a8a3a"/></svg>
<div class="t" style="left:264px;top:226.5px;font-size:7.600px;color:#161616;letter-spacing:-.18px;-webkit-text-stroke:.18px #222">Optimetrics</div>
<div style="left:242px;top:239.15px;width:8px;height:1px;border-top:1px dotted #9a9a9a"></div>
<div style="left:239px;top:236.15px;width:6.4px;height:6.4px;background:#fff;border:1px solid #8a8a8a"></div>
<div style="left:240.4px;top:238.95000000000002px;width:3.6px;height:0.9px;background:#333"></div>
<div style="left:241.8px;top:237.55px;width:0.9px;height:3.6px;background:#333"></div>
<svg style="left:249.5px;top:233.65px" width="12" height="11" viewBox="0 0 12 11"><rect x="1.500" y="1" width="9.500" height="9" fill="#fff" stroke="#222" stroke-width=".9"/><path d="M3 8 l2-4 2 3 2-4" stroke="#b03030" fill="none" stroke-width=".8"/></svg>
<div class="t" style="left:264.6px;top:239.15px;font-size:7.600px;color:#161616;letter-spacing:-.18px;-webkit-text-stroke:.18px #222">Results</div>
<div style="left:242px;top:251.8px;width:8px;height:1px;border-top:1px dotted #9a9a9a"></div>
<div style="left:239px;top:248.8px;width:6.4px;height:6.4px;background:#fff;border:1px solid #8a8a8a"></div>
<div style="left:240.4px;top:251.60000000000002px;width:3.6px;height:0.9px;background:#333"></div>
<svg style="left:249.5px;top:246.3px" width="12" height="11" viewBox="0 0 12 11"><rect x="2" y="1.500" width="8.500" height="8.500" fill="#fff" stroke="#b03030" stroke-width=".9"/><path d="M4 3 v5.500 M6 4 v4 M8 3 v5.500" stroke="#b03030" stroke-width=".8"/></svg>
<div class="t" style="left:264.6px;top:251.8px;font-size:7.600px;color:#161616;letter-spacing:-.18px;-webkit-text-stroke:.18px #222">Port Field Display</div>
<div style="left:242px;top:264.45px;width:8px;height:1px;border-top:1px dotted #9a9a9a"></div>
<div style="left:239px;top:261.45px;width:6.4px;height:6.4px;background:#fff;border:1px solid #8a8a8a"></div>
<div style="left:240.4px;top:264.25px;width:3.6px;height:0.9px;background:#333"></div>
<svg style="left:249.0px;top:258.95px" width="12" height="11" viewBox="0 0 12 11"><rect x="1" y="1" width="6" height="5" fill="#d8402a"/><rect x="3" y="3" width="6" height="5" fill="#3aa83a"/><rect x="5.500" y="5" width="6" height="5.500" fill="#2a5ad8"/></svg>
<div class="t" style="left:264.6px;top:264.45px;font-size:7.600px;color:#161616;letter-spacing:-.18px;-webkit-text-stroke:.18px #222">Field Overlays</div>
<div style="left:242px;top:277.1px;width:8px;height:1px;border-top:1px dotted #9a9a9a"></div>
<svg style="left:249.5px;top:271.6px" width="12" height="11" viewBox="0 0 12 11"><path d="M1.500 2 h9 q0 3.500-4.500 4 q-4.500-.5-4.500-4z" fill="#f2d21a" stroke="#222" stroke-width=".7"/><path d="M6 6 v2.500 M3 10 h6 l-1.500-1.500 h-3z" stroke="#222" fill="#222" stroke-width=".9"/></svg>
<div class="t" style="left:264.6px;top:277.1px;font-size:7.600px;color:#161616;letter-spacing:-.18px;-webkit-text-stroke:.18px #222">Radiation</div>
<div style="left:225.7px;top:286.75px;width:6.4px;height:6.4px;background:#fff;border:1px solid #8a8a8a"></div>
<div style="left:227.1px;top:289.55px;width:3.6px;height:0.9px;background:#333"></div>
<div style="left:228.5px;top:288.15px;width:0.9px;height:3.6px;background:#333"></div>
<svg style="left:235.5px;top:284.25px" width="12" height="11" viewBox="0 0 12 11"><path d="M1 2.500 h4 l1 1 h5 v6.500 h-10z" fill="#e8e098" stroke="#a8a050" stroke-width=".7"/></svg>
<div class="t" style="left:250.9px;top:289.75px;font-size:7.600px;color:#161616;letter-spacing:-.18px;-webkit-text-stroke:.18px #222">Definitions</div>
<svg style="left:239px;top:211px" width="9" height="14" viewBox="0 0 9 14"><path d="M.500 .500 v11 l2.500-2.500 1.800 4 1.500-.7 -1.800-3.800 h3.500z" fill="#fff" stroke="#111" stroke-width=".8"/></svg>
<div style="left:351.7px;top:101.4px;width:100px;height:473.5px;background:#fff;border-left:1.500px solid #8a8a8a;border-top:1.500px solid #a0a0a0"></div>
<div style="left:448px;top:103px;width:3.5px;height:471px;background:#f0f0f0"></div>
<div style="left:353px;top:562.5px;width:95px;height:11px;background:#f2f2f2"></div>
<div class="t" style="left:356px;top:568px;font-size:5px;color:#333">◀</div>
<div class="t" style="left:439.5px;top:568px;font-size:5px;color:#333">▶</div>
<div style="left:372.4px;top:563.3px;width:48.5px;height:9.5px;background:linear-gradient(to bottom,#f4f4f4,#dcdcdc 50%,#cfcfcf);border:1px solid #9b9b9b;border-radius:1.500px"></div>
<div class="t" style="left:392.5px;top:567.6px;font-size:6px;color:#555;letter-spacing:.3px">ııı</div>
<div style="left:358.5px;top:113.4px;width:1px;height:121.6px;border-left:1px dotted #9a9a9a"></div>
<div style="left:371.7px;top:126.06px;width:1px;height:7.659999999999997px;border-left:1px dotted #9a9a9a"></div>
<div style="left:371.7px;top:164.04000000000002px;width:1px;height:7.659999999999968px;border-left:1px dotted #9a9a9a"></div>
<div style="left:371.7px;top:240.0px;width:1px;height:7.659999999999997px;border-left:1px dotted #9a9a9a"></div>
<div style="left:385.5px;top:138.72px;width:1px;height:7.659999999999997px;border-left:1px dotted #9a9a9a"></div>
<div style="left:385.5px;top:176.7px;width:1px;height:20.32000000000002px;border-left:1px dotted #9a9a9a"></div>
<div style="left:385.5px;top:252.66px;width:1px;height:7.660000000000053px;border-left:1px dotted #9a9a9a"></div>
<div style="left:399px;top:202.02px;width:1px;height:7.659999999999997px;border-left:1px dotted #9a9a9a"></div>
<div style="left:412.5px;top:214.68px;width:1px;height:7.659999999999997px;border-left:1px dotted #9a9a9a"></div>
<div style="left:358.5px;top:277.98px;width:1px;height:7.659999999999968px;border-left:1px dotted #9a9a9a"></div>
<div style="left:358.5px;top:285.64px;width:7.5px;height:1px;border-top:1px dotted #9a9a9a"></div>
<svg style="left:352.5px;top:102.9px" width="12" height="11" viewBox="0 0 12 11"><path d="M1.200 6.800 l3.200-4 h6.600 l-3.200 4z" fill="#e6e6e6" stroke="#3a3a3a" stroke-width=".9"/><path d="M1.200 6.800 v2.200 h6.600 l3.200-4 v-2.200" fill="#c4c4c4" stroke="#3a3a3a" stroke-width=".8"/><path d="M7.800 6.800 v2.200" stroke="#3a3a3a" stroke-width=".8"/></svg>
<div class="t" style="left:367.4px;top:109.80000000000001px;font-size:8.200px;color:#111;-webkit-text-stroke:.15px #222;">Solids</div>
<div style="left:358.5px;top:121.06px;width:6.5px;height:1px;border-top:1px dotted #9a9a9a"></div>
<div style="left:355.5px;top:118.06px;width:6.4px;height:6.4px;background:#fff;border:1px solid #8a8a8a"></div>
<div style="left:356.9px;top:120.86px;width:3.6px;height:0.9px;background:#333"></div>
<svg style="left:365.5px;top:115.56px" width="12" height="11" viewBox="0 0 12 11"><path d="M.8 5.200 l2.600-3.700 h8 l-2.600 3.700z" fill="#e0202a"/><path d="M.8 8 l2.600-3.300 h8 l-2.600 3.300z" fill="#2a3ae0"/><path d="M.8 10 l2-2.200 h8 l-2 2.200z" fill="#1a9a9a"/></svg>
<div class="t" style="left:380.9px;top:122.46000000000001px;font-size:8.200px;color:#111;-webkit-text-stroke:.15px #222;">air</div>
<div style="left:371.7px;top:133.72px;width:6.300000000000011px;height:1px;border-top:1px dotted #9a9a9a"></div>
<div style="left:368.7px;top:130.72px;width:6.4px;height:6.4px;background:#fff;border:1px solid #8a8a8a"></div>
<div style="left:370.09999999999997px;top:133.52px;width:3.6px;height:0.9px;background:#333"></div>
<svg style="left:379.0px;top:128.22px" width="12" height="11" viewBox="0 0 12 11"><path d="M1.200 6.800 l3.200-4 h6.600 l-3.200 4z" fill="#d2d2d2" stroke="#2a2a2a" stroke-width=".9"/><path d="M1.200 6.800 v2.200 h6.600 l3.200-4 v-2.200" fill="#a8a8a8" stroke="#2a2a2a" stroke-width=".8"/><path d="M7.800 6.800 v2.200" stroke="#2a2a2a" stroke-width=".8"/></svg>
<div class="t" style="left:394.9px;top:135.12px;font-size:8.200px;color:#111;-webkit-text-stroke:.15px #222;">Radiation</div>
<div style="left:385.5px;top:146.38px;width:6.5px;height:1px;border-top:1px dotted #9a9a9a"></div>
<svg style="left:392.5px;top:140.88px" width="12" height="11" viewBox="0 0 12 11"><path d="M3 3.500 l2-2 h3.500 v6.500 l-2 2.300 h-3.500z" fill="#e8e83a" stroke="#222" stroke-width=".9"/><path d="M3 3.500 h3.500 v6.800 M6.500 3.500 l2-2" fill="none" stroke="#222" stroke-width=".8"/></svg>
<div class="t" style="left:408.4px;top:147.78px;font-size:8.200px;color:#111;-webkit-text-stroke:.15px #222;">CreateBox</div>
<div style="left:358.5px;top:159.04000000000002px;width:6.5px;height:1px;border-top:1px dotted #9a9a9a"></div>
<div style="left:355.5px;top:156.04000000000002px;width:6.4px;height:6.4px;background:#fff;border:1px solid #8a8a8a"></div>
<div style="left:356.9px;top:158.84000000000003px;width:3.6px;height:0.9px;background:#333"></div>
<svg style="left:365.5px;top:153.54000000000002px" width="12" height="11" viewBox="0 0 12 11"><path d="M.8 5.200 l2.600-3.700 h8 l-2.600 3.700z" fill="#e0202a"/><path d="M.8 8 l2.600-3.300 h8 l-2.600 3.300z" fill="#2a3ae0"/><path d="M.8 10 l2-2.200 h8 l-2 2.200z" fill="#1a9a9a"/></svg>
<div class="t" style="left:380.9px;top:160.44000000000003px;font-size:8.200px;color:#111;-webkit-text-stroke:.15px #222;">copper</div>
<div style="left:371.7px;top:171.7px;width:6.300000000000011px;height:1px;border-top:1px dotted #9a9a9a"></div>
<div style="left:368.7px;top:168.7px;width:6.4px;height:6.4px;background:#fff;border:1px solid #8a8a8a"></div>
<div style="left:370.09999999999997px;top:171.5px;width:3.6px;height:0.9px;background:#333"></div>
<svg style="left:379.0px;top:166.2px" width="12" height="11" viewBox="0 0 12 11"><path d="M1.200 6.800 l3.200-4 h6.600 l-3.200 4z" fill="#d2d2d2" stroke="#2a2a2a" stroke-width=".9"/><path d="M1.200 6.800 v2.200 h6.600 l3.200-4 v-2.200" fill="#a8a8a8" stroke="#2a2a2a" stroke-width=".8"/><path d="M7.800 6.800 v2.200" stroke="#2a2a2a" stroke-width=".8"/></svg>
<div class="t" style="left:394.9px;top:173.1px;font-size:8.200px;color:#111;-webkit-text-stroke:.15px #222;">Metal</div>
<div style="left:385.5px;top:184.36px;width:6.5px;height:1px;border-top:1px dotted #9a9a9a"></div>
<svg style="left:392.5px;top:178.86px" width="12" height="11" viewBox="0 0 12 11"><path d="M3 3.500 l2-2 h3.500 v6.500 l-2 2.300 h-3.500z" fill="#e8e83a" stroke="#222" stroke-width=".9"/><path d="M3 3.500 h3.500 v6.800 M6.500 3.500 l2-2" fill="none" stroke="#222" stroke-width=".8"/></svg>
<div class="t" style="left:408.4px;top:185.76000000000002px;font-size:8.200px;color:#111;-webkit-text-stroke:.15px #222;">CreateBox</div>
<div style="left:385.5px;top:197.02px;width:6.5px;height:1px;border-top:1px dotted #9a9a9a"></div>
<div style="left:382.5px;top:194.02px;width:6.4px;height:6.4px;background:#fff;border:1px solid #8a8a8a"></div>
<div style="left:383.9px;top:196.82000000000002px;width:3.6px;height:0.9px;background:#333"></div>
<svg style="left:392.0px;top:191.52px" width="12" height="11" viewBox="0 0 12 11"><rect x="1.500" y="1.500" width="7" height="7" fill="#e8d820" stroke="#222" stroke-width=".8"/><rect x="6" y="6" width="4.500" height="4.500" fill="#fff" stroke="#222" stroke-width=".8"/></svg>
<div class="t" style="left:408.4px;top:198.42000000000002px;font-size:8.200px;color:#111;-webkit-text-stroke:.15px #222;font-weight:bold;font-size:7.800px;">Subtract</div>
<div style="left:399px;top:209.68px;width:6px;height:1px;border-top:1px dotted #9a9a9a"></div>
<div style="left:396px;top:206.68px;width:6.4px;height:6.4px;background:#fff;border:1px solid #8a8a8a"></div>
<div style="left:397.4px;top:209.48000000000002px;width:3.6px;height:0.9px;background:#333"></div>
<svg style="left:406.0px;top:204.18px" width="12" height="11" viewBox="0 0 12 11"><path d="M1.200 6.800 l3.200-4 h6.600 l-3.200 4z" fill="#d2d2d2" stroke="#2a2a2a" stroke-width=".9"/><path d="M1.200 6.800 v2.200 h6.600 l3.200-4 v-2.200" fill="#a8a8a8" stroke="#2a2a2a" stroke-width=".8"/><path d="M7.800 6.800 v2.200" stroke="#2a2a2a" stroke-width=".8"/></svg>
<div class="t" style="left:422px;top:211.08px;font-size:8.200px;color:#111;-webkit-text-stroke:.15px #222;">air</div>
<div style="left:412.5px;top:222.34px;width:6.5px;height:1px;border-top:1px dotted #9a9a9a"></div>
<svg style="left:419.5px;top:216.84px" width="12" height="11" viewBox="0 0 12 11"><path d="M3 3.500 l2-2 h3.500 v6.500 l-2 2.300 h-3.500z" fill="#e8e83a" stroke="#222" stroke-width=".9"/><path d="M3 3.500 h3.500 v6.800 M6.500 3.500 l2-2" fill="none" stroke="#222" stroke-width=".8"/></svg>
<div class="t" style="left:435.5px;top:223.74px;font-size:8.200px;color:#111;width:12.0px;overflow:hidden">Cre</div>
<div style="left:358.5px;top:235.0px;width:6.5px;height:1px;border-top:1px dotted #9a9a9a"></div>
<div style="left:355.5px;top:232.0px;width:6.4px;height:6.4px;background:#fff;border:1px solid #8a8a8a"></div>
<div style="left:356.9px;top:234.8px;width:3.6px;height:0.9px;background:#333"></div>
<svg style="left:365.5px;top:229.5px" width="12" height="11" viewBox="0 0 12 11"><path d="M.8 5.200 l2.600-3.700 h8 l-2.600 3.700z" fill="#e0202a"/><path d="M.8 8 l2.600-3.300 h8 l-2.600 3.300z" fill="#2a3ae0"/><path d="M.8 10 l2-2.200 h8 l-2 2.200z" fill="#1a9a9a"/></svg>
<div class="t" style="left:380.9px;top:236.4px;font-size:8.200px;color:#111;-webkit-text-stroke:.15px #222;">vacuum</div>
<div style="left:371.7px;top:247.66px;width:6.300000000000011px;height:1px;border-top:1px dotted #9a9a9a"></div>
<div style="left:368.7px;top:244.66px;width:6.4px;height:6.4px;background:#fff;border:1px solid #8a8a8a"></div>
<div style="left:370.09999999999997px;top:247.46px;width:3.6px;height:0.9px;background:#333"></div>
<svg style="left:379.0px;top:242.16px" width="12" height="11" viewBox="0 0 12 11"><path d="M1.200 6.800 l3.200-4 h6.600 l-3.200 4z" fill="#d2d2d2" stroke="#2a2a2a" stroke-width=".9"/><path d="M1.200 6.800 v2.200 h6.600 l3.200-4 v-2.200" fill="#a8a8a8" stroke="#2a2a2a" stroke-width=".8"/><path d="M7.800 6.800 v2.200" stroke="#2a2a2a" stroke-width=".8"/></svg>
<div class="t" style="left:394.9px;top:249.06px;font-size:8.200px;color:#111;-webkit-text-stroke:.15px #222;">air1</div>
<div style="left:385.5px;top:260.32000000000005px;width:6.5px;height:1px;border-top:1px dotted #9a9a9a"></div>
<svg style="left:392.5px;top:254.82000000000005px" width="12" height="11" viewBox="0 0 12 11"><path d="M3 3.500 l2-2 h3.500 v6.500 l-2 2.300 h-3.500z" fill="#e8e83a" stroke="#222" stroke-width=".9"/><path d="M3 3.500 h3.500 v6.800 M6.500 3.500 l2-2" fill="none" stroke="#222" stroke-width=".8"/></svg>
<div class="t" style="left:408.4px;top:261.72px;font-size:8.200px;color:#111;-webkit-text-stroke:.15px #222;">CreateBox</div>
<svg style="left:352.5px;top:267.48px" width="12" height="11" viewBox="0 0 12 11"><path d="M2 1 v9 h9" stroke="#111" fill="none" stroke-width="1"/><path d="M2 10 l6-6" stroke="#111" stroke-width=".9"/></svg>
<div class="t" style="left:367.4px;top:274.38px;font-size:8.200px;color:#111;-webkit-text-stroke:.15px #222;">Coordinate Systems</div>
<svg style="left:366.5px;top:280.14px" width="12" height="11" viewBox="0 0 12 11"><circle cx="5" cy="5" r="4" fill="#1a5ac8"/><path d="M3 3 q2-1 3 1 t-2 3" fill="#3aa83a"/><path d="M8 9 h3 v1.500 h-3z" fill="#c03030"/></svg>
<div class="t" style="left:380.9px;top:287.03999999999996px;font-size:8.200px;color:#111;-webkit-text-stroke:.15px #222;">Global</div>
<svg style="left:352.5px;top:292.8px" width="12" height="11" viewBox="0 0 12 11"><path d="M1 5 l3-3 h7 l-3 3z M1 8 l3-3 h7 l-3 3z" fill="#555" stroke="#111" stroke-width=".6"/><path d="M1 10 l3-2 h7 l-3 2z" fill="#888" stroke="#111" stroke-width=".5"/></svg>
<div class="t" style="left:367.4px;top:299.7px;font-size:8.200px;color:#111;-webkit-text-stroke:.15px #222;">Planes</div>
<svg style="left:352.5px;top:305.46000000000004px" width="12" height="11" viewBox="0 0 12 11"><path d="M1 7 l3-5 h6 l-2 5z" fill="#bbb" stroke="#666" stroke-width=".6"/><path d="M2 9.500 l3-5 h6 l-2 5z" fill="#999" stroke="#555" stroke-width=".6"/></svg>
<div class="t" style="left:367.4px;top:312.36px;font-size:8.200px;color:#111;-webkit-text-stroke:.15px #222;">Lists</div>
<div style="left:451.3px;top:101.4px;width:648px;height:2px;background:#a9a9a9"></div>
<div style="left:451.3px;top:101.4px;width:1.5px;height:474px;background:#8f8f8f"></div>
<svg style="left:452.8px;top:103.4px" width="646.2" height="474.2" viewBox="452.8 103.4 646.2 474.2"><rect x="452.8" y="103.4" width="646.2" height="474.2" fill="#fff"/><path d="M447.8 -648.9L1104.0 -477.0M447.8 -633.7L1104.0 -461.8M447.8 -618.5L1104.0 -446.6M447.8 -603.3L1104.0 -431.4M447.8 -572.9L1104.0 -401.0M447.8 -557.7L1104.0 -385.8M447.8 -542.5L1104.0 -370.6M447.8 -527.3L1104.0 -355.4M447.8 -496.9L1104.0 -325.0M447.8 -481.7L1104.0 -309.8M447.8 -466.5L1104.0 -294.6M447.8 -451.3L1104.0 -279.4M447.8 -420.9L1104.0 -249.0M447.8 -405.7L1104.0 -233.8M447.8 -390.5L1104.0 -218.6M447.8 -375.3L1104.0 -203.4M447.8 -344.9L1104.0 -173.0M447.8 -329.7L1104.0 -157.8M447.8 -314.5L1104.0 -142.6M447.8 -299.3L1104.0 -127.4M447.8 -268.9L1104.0 -97.0M447.8 -253.7L1104.0 -81.8M447.8 -238.5L1104.0 -66.6M447.8 -223.3L1104.0 -51.4M447.8 -192.9L1104.0 -21.0M447.8 -177.7L1104.0 -5.8M447.8 -162.5L1104.0 9.4M447.8 -147.3L1104.0 24.6M447.8 -116.9L1104.0 55.0M447.8 -101.7L1104.0 70.2M447.8 -86.5L1104.0 85.4M447.8 -71.3L1104.0 100.6M447.8 -40.9L1104.0 131.0M447.8 -25.7L1104.0 146.2M447.8 -10.5L1104.0 161.4M447.8 4.7L1104.0 176.6M447.8 35.1L1104.0 207.0M447.8 50.3L1104.0 222.2M447.8 65.5L1104.0 237.4M447.8 80.7L1104.0 252.6M447.8 111.1L1104.0 283.0M447.8 126.3L1104.0 298.2M447.8 141.5L1104.0 313.4M447.8 156.7L1104.0 328.6M447.8 187.1L1104.0 359.0M447.8 202.3L1104.0 374.2M447.8 217.5L1104.0 389.4M447.8 232.7L1104.0 404.6M447.8 263.1L1104.0 435.0M447.8 278.3L1104.0 450.2M447.8 293.5L1104.0 465.4M447.8 308.7L1104.0 480.6M447.8 339.1L1104.0 511.0M447.8 354.3L1104.0 526.2M447.8 369.5L1104.0 541.4M447.8 384.7L1104.0 556.6M447.8 415.1L1104.0 587.0M447.8 430.3L1104.0 602.2M447.8 445.5L1104.0 617.4M447.8 460.7L1104.0 632.6M447.8 491.1L1104.0 663.0M447.8 506.3L1104.0 678.2M447.8 521.5L1104.0 693.4M447.8 536.7L1104.0 708.6M447.8 567.1L1104.0 739.0M447.8 582.3L1104.0 754.2M447.8 597.5L1104.0 769.4M447.8 612.7L1104.0 784.6M447.8 643.1L1104.0 815.0M447.8 658.3L1104.0 830.2M447.8 673.5L1104.0 845.4M447.8 688.7L1104.0 860.6M447.8 -278.0L1104.0 -684.9M447.8 -267.5L1104.0 -674.3M447.8 -257.0L1104.0 -663.8M447.8 -246.4L1104.0 -653.3M447.8 -225.3L1104.0 -632.2M447.8 -214.8L1104.0 -621.6M447.8 -204.3L1104.0 -611.1M447.8 -193.7L1104.0 -600.6M447.8 -172.6L1104.0 -579.5M447.8 -162.1L1104.0 -568.9M447.8 -151.6L1104.0 -558.4M447.8 -141.0L1104.0 -547.9M447.8 -119.9L1104.0 -526.8M447.8 -109.4L1104.0 -516.2M447.8 -98.9L1104.0 -505.7M447.8 -88.3L1104.0 -495.2M447.8 -67.2L1104.0 -474.1M447.8 -56.7L1104.0 -463.5M447.8 -46.2L1104.0 -453.0M447.8 -35.6L1104.0 -442.5M447.8 -14.5L1104.0 -421.4M447.8 -4.0L1104.0 -410.8M447.8 6.5L1104.0 -400.3M447.8 17.1L1104.0 -389.8M447.8 38.2L1104.0 -368.7M447.8 48.7L1104.0 -358.1M447.8 59.2L1104.0 -347.6M447.8 69.8L1104.0 -337.1M447.8 90.9L1104.0 -316.0M447.8 101.4L1104.0 -305.4M447.8 111.9L1104.0 -294.9M447.8 122.5L1104.0 -284.4M447.8 143.6L1104.0 -263.3M447.8 154.1L1104.0 -252.7M447.8 164.6L1104.0 -242.2M447.8 175.2L1104.0 -231.7M447.8 196.3L1104.0 -210.6M447.8 206.8L1104.0 -200.0M447.8 217.3L1104.0 -189.5M447.8 227.9L1104.0 -179.0M447.8 249.0L1104.0 -157.9M447.8 259.5L1104.0 -147.3M447.8 270.0L1104.0 -136.8M447.8 280.6L1104.0 -126.3M447.8 301.7L1104.0 -105.2M447.8 312.2L1104.0 -94.6M447.8 322.7L1104.0 -84.1M447.8 333.3L1104.0 -73.6M447.8 354.4L1104.0 -52.5M447.8 364.9L1104.0 -41.9M447.8 375.4L1104.0 -31.4M447.8 386.0L1104.0 -20.9M447.8 407.1L1104.0 0.2M447.8 417.6L1104.0 10.8M447.8 428.1L1104.0 21.3M447.8 438.7L1104.0 31.8M447.8 459.8L1104.0 52.9M447.8 470.3L1104.0 63.5M447.8 480.8L1104.0 74.0M447.8 491.4L1104.0 84.5M447.8 512.5L1104.0 105.6M447.8 523.0L1104.0 116.2M447.8 533.5L1104.0 126.7M447.8 544.1L1104.0 137.2M447.8 565.2L1104.0 158.3M447.8 575.7L1104.0 168.9M447.8 586.2L1104.0 179.4M447.8 596.8L1104.0 189.9M447.8 617.9L1104.0 211.0M447.8 628.4L1104.0 221.6M447.8 638.9L1104.0 232.1M447.8 649.5L1104.0 242.6M447.8 670.6L1104.0 263.7M447.8 681.1L1104.0 274.3M447.8 691.6L1104.0 284.8M447.8 702.2L1104.0 295.3M447.8 723.3L1104.0 316.4M447.8 733.8L1104.0 327.0M447.8 744.3L1104.0 337.5M447.8 754.9L1104.0 348.0M447.8 776.0L1104.0 369.1M447.8 786.5L1104.0 379.7M447.8 797.0L1104.0 390.2M447.8 807.6L1104.0 400.7M447.8 828.7L1104.0 421.8M447.8 839.2L1104.0 432.4M447.8 849.7L1104.0 442.9M447.8 860.3L1104.0 453.4M447.8 881.4L1104.0 474.5M447.8 891.9L1104.0 485.1M447.8 902.4L1104.0 495.6M447.8 913.0L1104.0 506.1M447.8 934.1L1104.0 527.2M447.8 944.6L1104.0 537.8M447.8 955.1L1104.0 548.3M447.8 965.7L1104.0 558.8M447.8 986.8L1104.0 579.9M447.8 997.3L1104.0 590.5M447.8 1007.8L1104.0 601.0M447.8 1018.4L1104.0 611.5M447.8 1039.5L1104.0 632.6M447.8 1050.0L1104.0 643.2M447.8 1060.5L1104.0 653.7M447.8 1071.1L1104.0 664.2M447.8 1092.2L1104.0 685.3M447.8 1102.7L1104.0 695.9M447.8 1113.2L1104.0 706.4M447.8 1123.8L1104.0 716.9M447.8 1144.9L1104.0 738.0M447.8 1155.4L1104.0 748.6M447.8 1165.9L1104.0 759.1M447.8 1176.5L1104.0 769.6" stroke="#f9f9f9" stroke-width="1" fill="none"/><path d="M447.8 -664.1L1104.0 -492.2M447.8 -588.1L1104.0 -416.2M447.8 -512.1L1104.0 -340.2M447.8 -436.1L1104.0 -264.2M447.8 -360.1L1104.0 -188.2M447.8 -284.1L1104.0 -112.2M447.8 -208.1L1104.0 -36.2M447.8 -132.1L1104.0 39.8M447.8 -56.1L1104.0 115.8M447.8 19.9L1104.0 191.8M447.8 95.9L1104.0 267.8M447.8 171.9L1104.0 343.8M447.8 247.9L1104.0 419.8M447.8 323.9L1104.0 495.8M447.8 399.9L1104.0 571.8M447.8 475.9L1104.0 647.8M447.8 551.9L1104.0 723.8M447.8 627.9L1104.0 799.8M447.8 -288.6L1104.0 -695.4M447.8 -235.9L1104.0 -642.7M447.8 -183.2L1104.0 -590.0M447.8 -130.5L1104.0 -537.3M447.8 -77.8L1104.0 -484.6M447.8 -25.1L1104.0 -431.9M447.8 27.6L1104.0 -379.2M447.8 80.3L1104.0 -326.5M447.8 133.0L1104.0 -273.8M447.8 185.7L1104.0 -221.1M447.8 238.4L1104.0 -168.4M447.8 291.1L1104.0 -115.7M447.8 343.8L1104.0 -63.0M447.8 396.5L1104.0 -10.3M447.8 449.2L1104.0 42.4M447.8 501.9L1104.0 95.1M447.8 554.6L1104.0 147.8M447.8 607.3L1104.0 200.5M447.8 660.0L1104.0 253.2M447.8 712.7L1104.0 305.9M447.8 765.4L1104.0 358.6M447.8 818.1L1104.0 411.3M447.8 870.8L1104.0 464.0M447.8 923.5L1104.0 516.7M447.8 976.2L1104.0 569.4M447.8 1028.9L1104.0 622.1M447.8 1081.6L1104.0 674.8M447.8 1134.3L1104.0 727.5" stroke="#f0f0f0" stroke-width="1.1" fill="none"/><defs><pattern id="pr" width="11.4" height="11.4" patternUnits="userSpaceOnUse" patternTransform="matrix(0.9238 0.3829 0.3829 -0.9238 686.8 269.9)"><rect width="11.4" height="11.4" fill="#595da4"/><rect width="11.4" height="3.08" fill="#7478be"/><rect width="1.94" height="11.4" fill="#7478be" opacity=".85"/><rect x="3.19" y="3.88" width="6.84" height="6.84" rx="1" fill="#2e3278"/></pattern><pattern id="pl" width="11.4" height="11.4" patternUnits="userSpaceOnUse" patternTransform="matrix(0.7168 -0.6973 0.6973 0.7168 619.1 252.6)"><rect width="11.4" height="11.4" fill="#474b8e"/><rect width="11.4" height="2.28" fill="#5e63a6"/><rect width="2.28" height="11.4" fill="#5e63a6" opacity=".85"/><rect x="3.19" y="3.88" width="6.84" height="6.84" rx="1" fill="#2c2f6e"/></pattern><pattern id="gr" width="11.4" height="11.4" patternUnits="userSpaceOnUse" patternTransform="matrix(0.9238 0.3829 0.3829 -0.9238 686.8 269.9)"><rect width="11.4" height="11.4" fill="#407a7c"/><rect width="11.4" height="3.08" fill="#5c9e84"/><rect width="1.94" height="11.4" fill="#5c9e84" opacity=".85"/><rect x="3.19" y="3.88" width="6.84" height="6.84" rx="1" fill="#1c3268"/></pattern><pattern id="gl" width="11.4" height="11.4" patternUnits="userSpaceOnUse" patternTransform="matrix(0.7168 -0.6973 0.6973 0.7168 619.1 252.6)"><rect width="11.4" height="11.4" fill="#305f68"/><rect width="11.4" height="2.28" fill="#44806a"/><rect width="2.28" height="11.4" fill="#44806a" opacity=".85"/><rect x="3.19" y="3.88" width="6.84" height="6.84" rx="1" fill="#19335a"/></pattern><pattern id="pt" width="6.4" height="6.4" patternUnits="userSpaceOnUse" patternTransform="matrix(0.8496 -0.5274 0.9689 0.2476 686.8 269.9)"><rect width="6.4" height="6.4" fill="#53579e"/><rect width="6.4" height="1.60" fill="#7276ba"/><rect width="1.60" height="6.4" fill="#7276ba" opacity=".85"/><rect x="2.43" y="2.43" width="3.20" height="3.20" rx="1" fill="#2c3074"/></pattern><pattern id="ptg" width="6.4" height="6.4" patternUnits="userSpaceOnUse" patternTransform="matrix(0.8496 -0.5274 0.9689 0.2476 686.8 269.9)"><rect width="6.4" height="6.4" fill="#447880"/><rect width="6.4" height="1.60" fill="#62a090"/><rect width="1.60" height="6.4" fill="#62a090" opacity=".85"/><rect x="2.43" y="2.43" width="3.20" height="3.20" rx="1" fill="#244468"/></pattern><pattern id="pbot" width="6.4" height="6.4" patternUnits="userSpaceOnUse" patternTransform="matrix(0.8496 -0.5274 0.9689 0.2476 747.5 529.9)"><rect width="6.4" height="6.4" fill="#5c60a8"/><rect width="6.4" height="1.60" fill="#8084c8"/><rect width="1.60" height="6.4" fill="#8084c8" opacity=".85"/><rect x="2.43" y="2.43" width="3.20" height="3.20" rx="1" fill="#30347a"/></pattern><filter id="bl" x="-5%" y="-5%" width="110%" height="110%"><feGaussianBlur stdDeviation=".8"/></filter><filter id="bl2" x="-5%" y="-5%" width="110%" height="110%"><feGaussianBlur stdDeviation=".45"/></filter><filter id="nz" x="0" y="0" width="100%" height="100%"><feTurbulence type="fractalNoise" baseFrequency=".85" numOctaves="2" seed="4"/><feColorMatrix type="matrix" values="0 0 0 0 .13  0 0 0 0 .16  0 0 0 0 .42  0 0 0 2.2 -.95"/></filter><clipPath id="cpTop"><polygon points="729.7,181.2 799.9,199.7 686.8,269.9 619.1,252.6"/></clipPath><clipPath id="cpAll"><polygon points="729.7,181.2 799.9,199.7 859.5,454.9 747.5,529.9 677.7,511.6 619.1,252.6"/></clipPath></defs><g filter="url(#bl)"><polygon points="619.1,252.6 686.8,269.9 747.5,529.9 677.7,511.6" fill="url(#pl)"/><polygon points="686.8,269.9 799.9,199.7 859.5,454.9 747.5,529.9" fill="url(#pr)"/><polygon points="657.0,262.5 686.8,269.9 745.5,503.5 710.5,499.0" fill="url(#gl)"/><polygon points="686.8,269.9 768.0,219.6 826.5,450.5 745.5,503.5" fill="url(#gr)"/><polygon points="745.5,503.5 826.5,450.5 838.0,452.0 859.5,454.9 747.5,529.9" fill="url(#pbot)" opacity=".82"/><polygon points="710.5,499.0 745.5,503.5 747.5,529.9 722.0,523.0" fill="url(#pl)" opacity=".7"/></g><g filter="url(#bl2)"><polygon points="729.7,181.2 799.9,199.7 686.8,269.9 619.1,252.6" fill="url(#pt)"/><polygon points="652.1,247.6 728.9,197.3 763.6,205.5 687.6,256.7" fill="url(#ptg)" opacity=".8"/><polygon points="687.6,256.7 763.6,205.5 768.0,219.6 686.8,269.9" fill="url(#ptg)" opacity=".55"/><polygon points="652.1,247.6 687.6,256.7 686.8,269.9 657.0,262.5" fill="url(#ptg)" opacity=".45"/></g><g clip-path="url(#cpAll)" opacity=".35"><rect x="615" y="178" width="250" height="356" filter="url(#nz)"/></g><g clip-path="url(#cpTop)" opacity=".55"><rect x="615" y="178" width="190" height="95" filter="url(#nz)"/></g><polygon points="729.7,181.2 799.9,199.7 859.5,454.9 747.5,529.9 677.7,511.6 619.1,252.6" stroke="#2a3280" stroke-width="1.4" fill="none" stroke-linejoin="round" opacity=".8"/><path d="M619.1 252.6L686.8 269.9L799.9 199.7M686.8 269.9L747.5 529.9" stroke="#3f5cb0" stroke-width="1.7" fill="none"/><path d="M687.6 256.7L745.5 503.5M748.6 251.4L798 449.5M745.5 503.5L826.5 450.5" stroke="#3558a8" stroke-width=".8" fill="none" opacity=".55"/><polygon points="652.1,247.6 728.9,197.3 763.6,205.5 687.6,256.7" stroke="#1f8a2c" stroke-width="1.2" fill="none"/><path d="M707.7 226.6L685.6 126" stroke="#e0282c" stroke-width="1.3"/><path d="M683.5 117.8l5.3 10.4-6.9 1.5z" fill="#e0202a"/><text x="683.4" y="117.3" font-family="Liberation Sans,sans-serif" font-size="8" fill="#d8202a">Z</text><path d="M804.6 493.8L1050 556.5" stroke="#1c2fb8" stroke-width="1.3"/><path d="M1057 558.5l-10.500 1.500 1.800-6.500z" fill="#1c2fb8"/><text x="1059" y="560" font-family="Liberation Sans,sans-serif" font-size="8" font-weight="bold" fill="#1c2fb8">Y</text><path d="M712 522.3L664 553" stroke="#1f6a2a" stroke-width="1.2"/><path d="M658.5 556l5.500-7.800 4.500 6.500z" fill="#1f6a2a"/><text x="698" y="226.5" font-family="Liberation Mono,monospace" font-size="8.500" font-weight="bold" fill="#111">Rad1</text><rect x="650.3" y="556.1" width="248.800" height="4.700" fill="#000"/><rect x="651.3" y="557.1" width="123.500" height="2.700" fill="#fff"/><text x="650.3" y="571.8" text-anchor="middle" font-family="Liberation Sans,sans-serif" font-size="8.300" fill="#222">0</text><text x="774.5" y="571.8" text-anchor="middle" font-family="Liberation Sans,sans-serif" font-size="8.300" fill="#222">25</text><text x="910" y="571.8" text-anchor="middle" font-family="Liberation Sans,sans-serif" font-size="8.300" fill="#222">50 (mm)</text></svg>
<div style="left:199px;top:577px;width:900px;height:3px;background:#f2f2f2"></div>
<div style="left:199px;top:577.8px;width:900px;height:1.2px;background:#9e9e9e"></div>
<div style="left:199px;top:579px;width:452px;height:107px;background:#f3f3f3"></div>
<div style="left:212px;top:581px;width:434.5px;height:101.5px;background:#fff;border:1px solid #9a9a9a;border-top-color:#7d7d7d;border-left-color:#7d7d7d"></div>
<div class="t" style="left:199px;top:653px;width:14px;height:60px;margin-top:-30px;"><div class="t" style="left:7px;top:30px;width:60px;margin-left:-30px;text-align:center;transform:rotate(-90deg);font-size:7px;color:#222">Message Manager</div></div>
<div class="t" style="left:204px;top:586.8px;font-size:9px;font-weight:bold;color:#333">×</div>
<div class="t" style="left:204.5px;top:596px;font-size:7px;color:#222">◂</div>
<div style="left:634px;top:582px;width:11.5px;height:99.5px;background:#f0f0f0;border-left:1px solid #ddd"></div>
<div class="t" style="left:636.5px;top:588px;font-size:6px;color:#222">▲</div>
<div class="t" style="left:636.5px;top:676px;font-size:6px;color:#222">▼</div>
<div style="left:635px;top:592px;width:9.5px;height:1.6px;background:#b5b5b5"></div>
<div style="left:635px;top:669px;width:9.5px;height:1.6px;background:#b5b5b5"></div>
<div style="left:248px;top:584px;width:1px;height:94px;border-left:1px dotted #999"></div>
<div class="t m" style="left:282.5px;top:588.3px;transform:scaleX(0.8517)">Port '2': One or more port lines were lost due to geometry modifications. (4:07:38 PM&nbsp; Feb 05, 2019)</div>
<div style="left:249px;top:588.3px;width:8px;height:1px;border-top:1px dotted #aaa"></div>
<svg style="left:266px;top:582.8px" width="12" height="11" viewBox="0 0 12 11"><path d="M6 .6 L11.5 10.4 H.5 Z" fill="#e8b923" stroke="#8a6d10" stroke-width=".7"/><rect x="5.3" y="3.6" width="1.4" height="3.8" fill="#222"/><rect x="5.3" y="8.1" width="1.4" height="1.3" fill="#222"/></svg>
<div class="t m" style="left:282.5px;top:599.6px;transform:scaleX(0.8540)">Port '2': Port lost its assignment due to geometry modifications and has been deleted. (4:07:39 PM&nbsp; Feb</div>
<div style="left:249px;top:604.1px;width:8px;height:1px;border-top:1px dotted #aaa"></div>
<svg style="left:266px;top:598.6px" width="12" height="11" viewBox="0 0 12 11"><path d="M6 .6 L11.5 10.4 H.5 Z" fill="#e8b923" stroke="#8a6d10" stroke-width=".7"/><rect x="5.3" y="3.6" width="1.4" height="3.8" fill="#222"/><rect x="5.3" y="8.1" width="1.4" height="1.3" fill="#222"/></svg>
<div class="t m" style="left:282.5px;top:608.9px;transform:scaleX(0.8641)">05, 2019)</div>
<div class="t m" style="left:282.5px;top:619.7px;transform:scaleX(0.8641)">HFSSDesign1: Solutions have been invalidated. Undo to recover. (4:07:39 PM&nbsp; Feb 05, 2019)</div>
<div style="left:249px;top:619.7px;width:8px;height:1px;border-top:1px dotted #aaa"></div>
<svg style="left:266px;top:614.2px" width="12" height="11" viewBox="0 0 12 11"><path d="M6 .6 L11.5 10.4 H.5 Z" fill="#e8b923" stroke="#8a6d10" stroke-width=".7"/><rect x="5.3" y="3.6" width="1.4" height="3.8" fill="#222"/><rect x="5.3" y="8.1" width="1.4" height="1.3" fill="#222"/></svg>
<div class="t m" style="left:282.5px;top:630.7px;transform:scaleX(0.8643)">Solution Setup 'Setup1', Sweep 'Sweep': Interpolating sweep converged. (4:19:44 PM&nbsp; Feb 05, 2019)</div>
<div style="left:249px;top:630.7px;width:8px;height:1px;border-top:1px dotted #aaa"></div>
<svg style="left:266px;top:625.2px" width="12" height="11" viewBox="0 0 12 11"><circle cx="6" cy="5.5" r="5.3" fill="#2a5fc0"/><circle cx="6" cy="4.2" r="3.6" fill="#4c86e0" opacity=".6"/><rect x="5.2" y="4.4" width="1.6" height="4.4" fill="#fff"/><rect x="5.2" y="2" width="1.6" height="1.6" fill="#fff"/></svg>
<div class="t m" style="left:282.5px;top:641.7px;transform:scaleX(0.8574)">Normal completion of simulation on server: Local Machine. (4:19:44 PM&nbsp; Feb 05, 2019)</div>
<div style="left:249px;top:641.7px;width:8px;height:1px;border-top:1px dotted #aaa"></div>
<svg style="left:266px;top:636.2px" width="12" height="11" viewBox="0 0 12 11"><circle cx="6" cy="5.5" r="5.3" fill="#2a5fc0"/><circle cx="6" cy="4.2" r="3.6" fill="#4c86e0" opacity=".6"/><rect x="5.2" y="4.4" width="1.6" height="4.4" fill="#fff"/><rect x="5.2" y="2" width="1.6" height="1.6" fill="#fff"/></svg>
<div class="t m" style="left:282.5px;top:653.0px;transform:scaleX(0.8641)">HFSSDesign1: Solutions have been invalidated. Undo to recover. (4:47:52 PM&nbsp; Feb 05, 2019)</div>
<div style="left:249px;top:653.0px;width:8px;height:1px;border-top:1px dotted #aaa"></div>
<svg style="left:266px;top:647.5px" width="12" height="11" viewBox="0 0 12 11"><path d="M6 .6 L11.5 10.4 H.5 Z" fill="#e8b923" stroke="#8a6d10" stroke-width=".7"/><rect x="5.3" y="3.6" width="1.4" height="3.8" fill="#222"/><rect x="5.3" y="8.1" width="1.4" height="1.3" fill="#222"/></svg>
<div class="t m" style="left:282.5px;top:664.2px;transform:scaleX(0.8643)">Solution Setup 'Setup1', Sweep 'Sweep': Interpolating sweep converged. (4:50:07 PM&nbsp; Feb 05, 2019)</div>
<div style="left:249px;top:664.2px;width:8px;height:1px;border-top:1px dotted #aaa"></div>
<svg style="left:266px;top:658.7px" width="12" height="11" viewBox="0 0 12 11"><circle cx="6" cy="5.5" r="5.3" fill="#2a5fc0"/><circle cx="6" cy="4.2" r="3.6" fill="#4c86e0" opacity=".6"/><rect x="5.2" y="4.4" width="1.6" height="4.4" fill="#fff"/><rect x="5.2" y="2" width="1.6" height="1.6" fill="#fff"/></svg>
<div class="t m" style="left:282.5px;top:675.3px;transform:scaleX(0.8574)">Normal completion of simulation on server: Local Machine. (4:50:07 PM&nbsp; Feb 05, 2019)</div>
<div style="left:249px;top:675.3px;width:8px;height:1px;border-top:1px dotted #aaa"></div>
<svg style="left:266px;top:669.8px" width="12" height="11" viewBox="0 0 12 11"><circle cx="6" cy="5.5" r="5.3" fill="#2a5fc0"/><circle cx="6" cy="4.2" r="3.6" fill="#4c86e0" opacity=".6"/><rect x="5.2" y="4.4" width="1.6" height="4.4" fill="#fff"/><rect x="5.2" y="2" width="1.6" height="1.6" fill="#fff"/></svg>
<div style="left:652px;top:579px;width:182px;height:107px;background:#f3f3f3"></div>
<div style="left:651.2px;top:579px;width:1.2px;height:106px;background:#8f8f8f"></div>
<div style="left:653px;top:581.5px;width:11.5px;height:100.5px;border:1px solid #c4c4c4;background:#f6f6f6"></div>
<div style="left:665px;top:581.3px;width:171px;height:101px;background:#fff;border:1px solid #b0b0b0;border-top:1.6px solid #7d7d7d;border-left:1.6px solid #8a8a8a"></div>
<div class="t" style="left:656px;top:585.9px;font-size:8px;font-weight:bold;color:#333">×</div>
<div class="t" style="left:656.5px;top:595.5px;font-size:6.5px;color:#222">◂</div>
<div class="t" style="left:652px;top:667.4px;width:14px;height:40px;margin-top:-20px;"><div class="t" style="left:7px;top:20px;width:40px;margin-left:-20px;text-align:center;transform:rotate(-90deg);font-size:7px;color:#222">Progress</div></div>
<div style="left:199px;top:685px;width:900px;height:15px;background:#f8f8f8;border-top:1px solid #d8d8d8"></div>
<div class="t" style="left:201px;top:694.6px;font-size:7.6px;color:#222">Ready</div>
<div style="left:199px;top:700px;width:900px;height:28px;background:linear-gradient(to bottom,#1d4f80 0,#5aa4dc 5%,#3a8cd0 14%,#2c80c6 50%,#2775ba 100%)"></div>
<div style="left:329px;top:701px;width:41px;height:27px;background:linear-gradient(to bottom,rgba(255,255,255,0.62),rgba(255,255,255,0.21) 48%,rgba(255,255,255,0.336));border:1px solid rgba(255,255,255,.4);border-left-color:rgba(20,60,110,.5);border-radius:2px"></div>
<div style="left:460px;top:701px;width:39px;height:27px;background:linear-gradient(to bottom,rgba(255,255,255,0.5),rgba(255,255,255,0.15) 48%,rgba(255,255,255,0.24));border:1px solid rgba(255,255,255,.4);border-left-color:rgba(20,60,110,.5);border-radius:2px"></div>
<div style="left:633px;top:701px;width:42px;height:27px;background:linear-gradient(to bottom,rgba(255,255,255,0.38),rgba(255,255,255,0.09) 48%,rgba(255,255,255,0.144));border:1px solid rgba(255,255,255,.4);border-left-color:rgba(20,60,110,.5);border-radius:2px"></div>
<div style="left:677px;top:701px;width:39px;height:27px;background:linear-gradient(to bottom,rgba(255,255,255,0.38),rgba(255,255,255,0.09) 48%,rgba(255,255,255,0.144));border:1px solid rgba(255,255,255,.4);border-left-color:rgba(20,60,110,.5);border-radius:2px"></div>
<div style="left:720px;top:701px;width:40px;height:27px;background:linear-gradient(to bottom,rgba(255,255,255,0.65),rgba(255,255,255,0.225) 48%,rgba(255,255,255,0.36000000000000004));border:1px solid rgba(255,255,255,.4);border-left-color:rgba(20,60,110,.5);border-radius:2px"></div>
<div style="left:763px;top:701px;width:42px;height:27px;background:linear-gradient(to bottom,rgba(255,255,255,0.45),rgba(255,255,255,0.125) 48%,rgba(255,255,255,0.2));border:1px solid rgba(255,255,255,.4);border-left-color:rgba(20,60,110,.5);border-radius:2px"></div>
<div style="left:808px;top:701px;width:26px;height:27px;background:linear-gradient(to bottom,rgba(255,255,255,0.4),rgba(255,255,255,0.1) 48%,rgba(255,255,255,0.16000000000000003));border:1px solid rgba(255,255,255,.4);border-left-color:rgba(20,60,110,.5);border-radius:2px"></div>
<svg style="left:205px;top:701px" width="27" height="27" viewBox="0 0 27 27"><defs><radialGradient id="orb" cx=".5" cy=".62" r=".62"><stop offset="0" stop-color="#58c8f4"/><stop offset=".5" stop-color="#1f73c0"/><stop offset="1" stop-color="#0d3470"/></radialGradient><linearGradient id="orbh" x1="0" y1="0" x2="0" y2="1"><stop offset="0" stop-color="#fff" stop-opacity=".75"/><stop offset="1" stop-color="#fff" stop-opacity="0"/></linearGradient></defs><circle cx="13.5" cy="13.5" r="12.6" fill="#9fd4f4" opacity=".55"/><circle cx="13.5" cy="13.5" r="11.6" fill="url(#orb)"/><ellipse cx="13.5" cy="7.5" rx="8.5" ry="5" fill="url(#orbh)" opacity=".6"/><path d="M7.2 8.6 q3-1.8 5.600-.3 l-.8 4.600 q-2.600-1.300-5.600 .2z" fill="#f0642a"/><path d="M14 8.500 q3-1.500 5.800 .3 l-.8 4.500 q-2.800-1.500-5.800-.3z" fill="#86c440"/><path d="M6.200 14.500 q3-1.600 5.600-.2 l-.8 4.500 q-2.600-1.300-5.600 .2z" fill="#38a0ec"/><path d="M13 14.400 q3-1.300 5.800 .3 l-.8 4.500 q-2.800-1.500-5.800-.3z" fill="#f6c724"/></svg>
<svg style="left:249px;top:701px" width="27" height="27" viewBox="0 0 27 27"><text x="13.800" y="23.300" font-family="Liberation Sans,sans-serif" font-size="32" font-weight="bold" text-anchor="middle" fill="#5cc4f4" stroke="#c4eafc" stroke-width=".5">e</text><path d="M5.500 23 Q0 13 9.500 6 T23 2.800" fill="none" stroke="#efc534" stroke-width="2"/></svg>
<svg style="left:293px;top:703px" width="22" height="22" viewBox="0 0 22 22"><rect x="3.500" y="3.500" width="15.500" height="15" rx="1" fill="#a7cbea" opacity=".85"/><circle cx="10.500" cy="11" r="6" fill="#ee8420"/><circle cx="10.500" cy="9.500" r="4.500" fill="#f7a850" opacity=".6"/><path d="M8.500 7.500 l5.500 3.500 -5.500 3.500z" fill="#fff"/></svg>
<svg style="left:338px;top:703px" width="22" height="22" viewBox="0 0 22 22"><circle cx="11" cy="11" r="10.5" fill="#e33b2e"/><path d="M11 11 L1.9 5.8 A10.5 10.5 0 0 0 11.6 21.5 Z" fill="#2da94f"/><path d="M11 11 L11.6 21.5 A10.5 10.5 0 0 0 20.2 6 L11 6 Z" fill="#fbbc05"/><circle cx="11" cy="11" r="5" fill="#fff"/><circle cx="11" cy="11" r="3.9" fill="#4285f4"/></svg>
<svg style="left:380px;top:703px" width="26" height="22" viewBox="0 0 26 22"><g transform="rotate(35 13 11)"><rect x="3" y="6" width="20" height="10" rx="1" fill="#111"/><path d="M4 5h18M4 17h18" stroke="#c7c83a" stroke-width="1.6" stroke-dasharray="1.5 1.5"/><path d="M8 11h10" stroke="#ddd" stroke-width=".8"/></g></svg>
<svg style="left:425px;top:703px" width="24" height="22" viewBox="0 0 24 22"><rect x="3" y="5" width="15" height="14" fill="#c9c9c4" stroke="#2d5f9a" stroke-width="1.6"/><path d="M7 15 L18 3.5 l2.2 .3 .3 2.2 L9 17z" fill="#e2452d"/></svg>
<svg style="left:466px;top:703px" width="26" height="22" viewBox="0 0 26 22"><rect x="3" y="3" width="20" height="16" rx="1" fill="#f3d774"/><rect x="3" y="7" width="20" height="12" fill="#f7e7a4"/><rect x="5" y="3" width="7" height="3" fill="#fff3c0"/><rect x="7" y="11" width="12" height="8" fill="#9cc3e6"/><rect x="9" y="13" width="8" height="3" fill="#e8f1fa"/></svg>
<svg style="left:511px;top:702px" width="24" height="24" viewBox="0 0 24 24"><circle cx="12" cy="11.5" r="9.8" fill="#2bb741" stroke="#fff" stroke-width="1.8"/><path d="M4 21.5 l1.6-5 3.2 3.2z" fill="#fff"/><path d="M8.5 7.5 q-1.2 1.5 .8 4.5 t5.2 4 q1.6 .2 2.2-1.4 l-2.2-1.3 -1 1 q-2-.8-3.2-3.1 l1-1 -1-2.4z" fill="#fff"/></svg>
<div style="left:556px;top:704px;width:21px;height:21px;background:#fbfbfb"></div>
<div class="t" style="left:566.5px;top:714px;font-family:'Liberation Serif',serif;font-size:20px;line-height:22px;height:22px;margin-top:-12px;margin-left:-5px;color:#444">δ</div>
<svg style="left:598px;top:703px" width="28" height="22" viewBox="0 0 28 22"><path d="M2 13 l7-3 4 3.5 -4 3z" fill="#3a6fb5"/><path d="M9 10 q4-2 7.5-8.5 q2.5 6 5 13.5 l-3.5 4 q-2-5-5-5.500z" fill="#e2692a"/><path d="M16.500 1.500 q2.500 6 5 13.500 l-3.5 4 q1-8-1.500-17.500z" fill="#a5281c"/><path d="M9 16.500 l4-3 q3 .5 5 5.500 q-2-.5-3.500 2z" fill="#f3b13c"/></svg>
<svg style="left:643px;top:703px" width="22" height="22" viewBox="0 0 22 22"><circle cx="11" cy="11" r="10.300" fill="#6aa84a"/><circle cx="11" cy="9" r="8" fill="#8cc466" opacity=".6"/><path d="M6.500 6 v6.500 q0 3.500 3.500 3.500 q2.200 0 3-1.500 v-8.500 h2.500 v10 h1.800 v1.800 h-4 v-1 q-1.500 1.500-4 1.500 q-5 0-5-5.300 v-7z" fill="#fff"/></svg>
<svg style="left:686px;top:704px" width="20" height="20" viewBox="0 0 20 20"><rect width="20" height="20" rx="1.500" fill="#c8201c"/><path d="M4 15.500 q4-2 6-9.500 q.3-2-.8-2 q-1.200 .2-.3 3 q1.500 4.500 6.800 6.500 q1.500 .3 1-.8 q-1-1-5-.2 q-4 .8-7.700 3z" fill="none" stroke="#fff" stroke-width="1.100"/></svg>
<svg style="left:728px;top:703px" width="23" height="23" viewBox="0 0 23 23"><circle cx="11.500" cy="11.500" r="11" fill="#6b3fa8"/><circle cx="11.500" cy="9" r="8.500" fill="#9a6fd0" opacity=".55"/><path d="M4 18 L11 6 l2 0 L7 18z M9.500 18 L15 8.500 l2 0 L12.500 18z M15 18 l3.500-6 1.500 0 0 6z" fill="#f2e9ff"/></svg>
<svg style="left:774px;top:703px" width="22" height="22" viewBox="0 0 22 22"><rect width="22" height="22" fill="#1a2fb8"/><rect x="3" y="3" width="16" height="16" fill="none" stroke="#fff" stroke-width="1.800"/><path d="M8 6.500 l8 4.500 -8 4.500z" fill="#fff"/><path d="M9.500 9 l4 2 -4 2z" fill="#1a2fb8"/></svg>
<div style="left:816px;top:704px;width:17px;height:21px;background:#cfd6dc"></div>
<div class="t" style="left:818px;top:714.5px;font-size:21px;font-weight:bold;line-height:22px;height:22px;margin-top:-11px;color:#333;letter-spacing:-1px">K</div>
<div style="left:833px;top:577.3px;width:456px;height:151px;background:#000"></div>
<div class="ov" style="top:583.5px;margin-left:2.4px;word-spacing:.9px">TO GET THE PROJECT CODE...</div>
<div class="ov" style="top:618.9000000000001px;margin-left:1.6px;word-spacing:2.4px">CONTACT +91 83000 15425</div>
<div class="ov" style="top:653.6px;margin-left:4.2px;">www.matlabprojectscode.com</div>
<div class="ov" style="top:687.9000000000001px;margin-left:3px;letter-spacing:.08px">matlabprojectscode@gmail.com</div>
<div style="left:1236.6px;top:676px;width:40.6px;height:39.6px;background:rgba(222,12,22,.93)"></div>
<div style="left:1240px;top:688.0px;width:33px;height:1.1px;background:rgba(70,0,8,.6)"></div>
<div style="left:1242px;top:690.6px;width:29px;height:1.1px;background:rgba(70,0,8,.6)"></div>
<div style="left:1240px;top:693.2px;width:33px;height:1.1px;background:rgba(70,0,8,.6)"></div>
<div style="left:1242px;top:695.8px;width:29px;height:1.1px;background:rgba(70,0,8,.6)"></div>
<div style="left:1240px;top:698.4px;width:33px;height:1.1px;background:rgba(70,0,8,.6)"></div>
<div style="left:1242px;top:701.0px;width:29px;height:1.1px;background:rgba(70,0,8,.6)"></div>
</div>
<div style="left:0;top:730px;width:600px;height:57px;filter:blur(.3px)">
<div class="t" style="left:9.3px;top:16.9px;font-size:11.6px;line-height:14px;height:14px;margin-top:-7px;color:#5aa0ea;letter-spacing:.1px">#Rectangular</div>
<div class="t" style="left:8.6px;top:40.2px;font-size:17.6px;font-weight:bold;line-height:22px;height:22px;margin-top:-11px;color:#ececec">Design of a Rectangular Waveguide antenna</div>
</div>
</body></html>
